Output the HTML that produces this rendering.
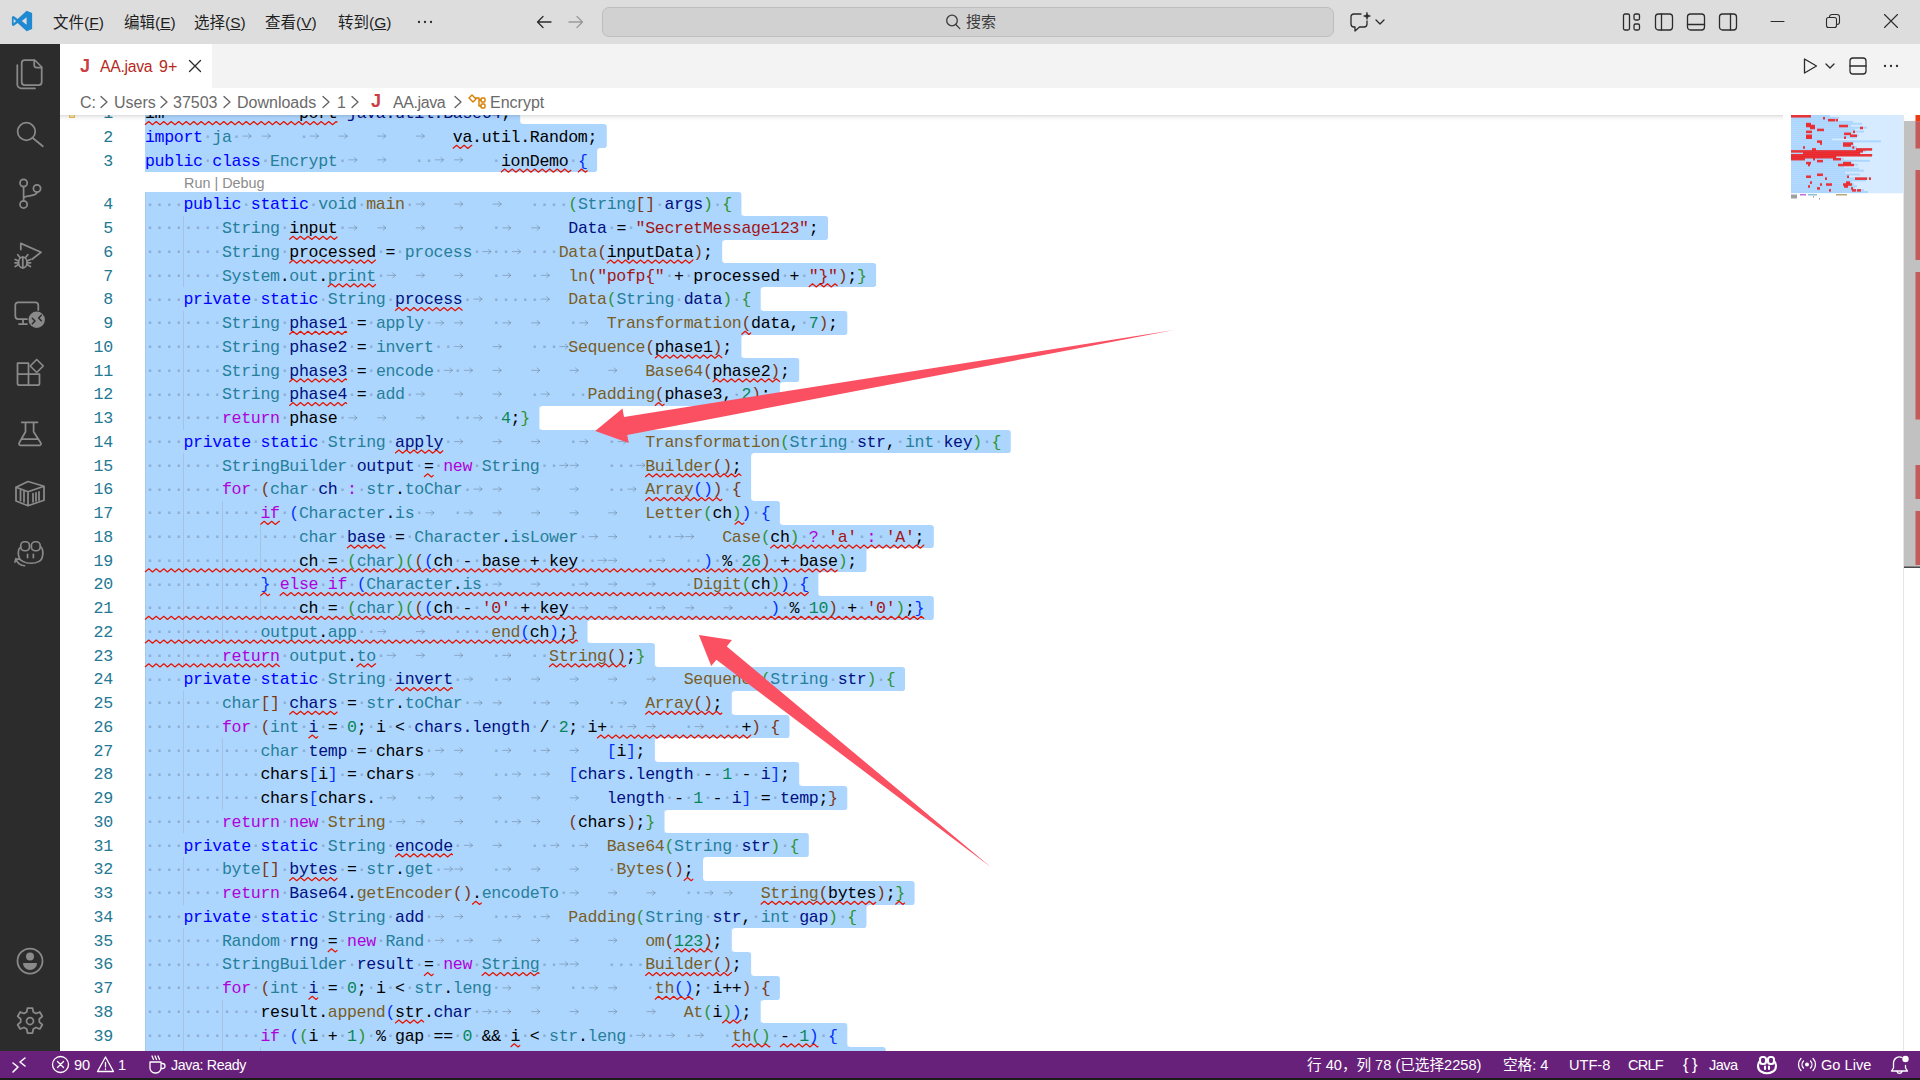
<!DOCTYPE html>
<html lang="zh-CN"><head><meta charset="utf-8"><title>AA.java - Visual Studio Code</title>
<style>
*{box-sizing:border-box;margin:0;padding:0}
html,body{width:1920px;height:1080px;overflow:hidden;background:#fff}
body{position:relative;font-family:"Liberation Sans","Noto Sans CJK SC",sans-serif;color:#333}
.abs{position:absolute}
#title{left:0;top:0;width:1920px;height:44px;background:#dddddd}
#title .m{position:absolute;top:12px;font-size:15.5px;line-height:22px;color:#1f1f1f;white-space:nowrap}
#search{left:602px;top:7px;width:732px;height:30px;background:#d1d1d1;border:1px solid #bdbdbd;border-radius:7px}
#search span{position:absolute;left:363px;top:3px;font-size:15px;line-height:22px;color:#3b3b3b}
#act{left:0;top:44px;width:60px;height:1007px;background:#2c2c2c}
#act svg{position:absolute;left:12px;width:36px;height:36px;fill:none;stroke:#8a8a8a;stroke-width:1.75;stroke-linecap:round;stroke-linejoin:round}
#tabs{left:60px;top:44px;width:1860px;height:44px;background:#f3f3f3}
#tab{left:0;top:0;width:152px;height:44px;background:#fff}
#tab span{position:absolute;white-space:nowrap}
#crumb{left:60px;top:88px;width:1860px;height:27px;background:#fff;font-size:16px;color:#6a6a6a;z-index:5}
#crumb span{position:absolute;top:4px;line-height:22px;white-space:nowrap}
#crumb svg{position:absolute}
#ed{left:60px;top:115px;width:1843px;height:936px;background:#fff;overflow:hidden}
#ed .under{position:absolute;left:0;top:0}
.ln{position:absolute;left:85px;height:23.75px;width:1500px;font:16.6px/23.75px "Liberation Mono",monospace;letter-spacing:-0.34px;white-space:pre}
.ln span,.ln i{position:absolute;top:1.2px;font-style:normal;font-weight:normal}
.ln i{color:rgba(60,75,95,.30);top:0.4px;font-weight:bold}
.num{position:absolute;left:0;width:52.8px;text-align:right;height:23.75px;padding-top:1.2px;font:16.6px/23.75px "Liberation Mono",monospace;letter-spacing:-0.34px;color:#237893}
#lens{left:184px;top:172.5px;font-size:14.4px;line-height:20px;color:#8c8c8c;white-space:nowrap}
#mini{left:1791px;top:115px;width:112px;height:78px;background:#d6ebff;overflow:hidden}
#sb{left:1903px;top:115px;width:17px;height:936px;background:#fff;border-left:1px solid #e4e4e4}
#status{left:0;top:1051px;width:1920px;height:27px;background:#68217a;color:#fff;font-size:14.6px}
#status span{position:absolute;top:3px;line-height:22px;white-space:nowrap}
#status svg{position:absolute;fill:none;stroke:#fff;stroke-width:1.3;stroke-linecap:round;stroke-linejoin:round}
#bot{left:0;top:1078px;width:1920px;height:2px;background:#1b1b1b}
#arrows{left:0;top:0;z-index:9;pointer-events:none}
.ti{position:absolute;fill:none;stroke:#2b2b2b;stroke-width:1.3;stroke-linecap:round;stroke-linejoin:round}
</style></head><body>

<div id="title" class="abs">
 <svg class="abs" style="left:11px;top:10px" width="22" height="22" viewBox="0 0 100 100"><path d="M71 3 30 41 12 27 4 31v38l8 4 18-14 41 38 25-11V14zM12 60V40l11 10zm37-10 22-17v34z" fill="#1f8ad2"/></svg>
 <span class="m" style="left:53px">文件(<u>F</u>)</span>
 <span class="m" style="left:124px">编辑(<u>E</u>)</span>
 <span class="m" style="left:194px">选择(<u>S</u>)</span>
 <span class="m" style="left:265px">查看(<u>V</u>)</span>
 <span class="m" style="left:338px">转到(<u>G</u>)</span>
 <svg class="abs" style="left:417px;top:20px" width="16" height="4" viewBox="0 0 16 4"><circle cx="2" cy="2" r="1.150" fill="#2b2b2b"/><circle cx="8" cy="2" r="1.150" fill="#2b2b2b"/><circle cx="14" cy="2" r="1.150" fill="#2b2b2b"/></svg>
 <svg class="ti" style="left:535px;top:13px" width="18" height="18" viewBox="0 0 18 18"><path d="M16 9H2.5M8 3.5 2.5 9 8 14.5"/></svg>
 <svg class="ti" style="left:567px;top:13px;stroke:#9a9a9a" width="18" height="18" viewBox="0 0 18 18"><path d="M2 9h13.5M10 3.5 15.5 9 10 14.5"/></svg>
 <div id="search" class="abs"><svg class="ti" style="left:341px;top:5px;stroke:#3b3b3b" width="18" height="18" viewBox="0 0 18 18"><circle cx="8" cy="7.500" r="5.300"/><path d="M11.800 11.500 15.800 15.600"/></svg><span>搜索</span></div>
 <svg class="ti" style="left:1348px;top:10px" width="24" height="24" viewBox="0 0 24 24"><path d="M13 4H6a3 3 0 0 0-3 3v7a3 3 0 0 0 3 3h1v4l4.5-4H16a3 3 0 0 0 3-3v-3"/><path d="M19 2.5l.9 2.6 2.6.9-2.6.9L19 9.500l-.9-2.600-2.600-.9 2.600-.9z" fill="#2b2b2b" stroke-width=".6"/></svg>
 <svg class="ti" style="left:1374px;top:16px" width="12" height="12" viewBox="0 0 12 12"><path d="M2 4l4 4 4-4"/></svg>
 <svg class="ti" style="left:1621px;top:11px" width="22" height="22" viewBox="0 0 22 22"><rect x="2.500" y="3" width="6" height="16" rx="1.5"/><rect x="13" y="3" width="5.500" height="6" rx="1.500"/><rect x="13" y="13" width="5.500" height="6" rx="1.500"/></svg>
 <svg class="ti" style="left:1653px;top:11px" width="22" height="22" viewBox="0 0 22 22"><rect x="2.500" y="3" width="17" height="16" rx="3"/><path d="M8.500 3v16"/></svg>
 <svg class="ti" style="left:1685px;top:11px" width="22" height="22" viewBox="0 0 22 22"><rect x="2.500" y="3" width="17" height="16" rx="3"/><path d="M2.500 13.500h17"/></svg>
 <svg class="ti" style="left:1717px;top:11px" width="22" height="22" viewBox="0 0 22 22"><rect x="2.500" y="3" width="17" height="16" rx="3"/><path d="M13.500 3v16"/></svg>
 <svg class="ti" style="left:1770px;top:14px;stroke-width:1.1" width="16" height="16" viewBox="0 0 16 16"><path d="M1 7.500h13"/></svg>
 <svg class="ti" style="left:1825px;top:13px;stroke-width:1.1" width="16" height="16" viewBox="0 0 16 16"><rect x="1.500" y="4.500" width="10" height="10" rx="2"/><path d="M4.500 4.300V4a2.500 2.500 0 0 1 2.500-2.500h5A2.500 2.500 0 0 1 14.500 4v5a2.500 2.500 0 0 1-2.500 2.500"/></svg>
 <svg class="ti" style="left:1883px;top:13px;stroke-width:1.1" width="16" height="16" viewBox="0 0 16 16"><path d="M1.500 1.500l13 13M14.500 1.500l-13 13"/></svg>
</div>

<div id="act" class="abs">
 <svg style="top:11px" viewBox="0 0 36 36"><path d="M12.700 5h10l7 7v15a3 3 0 0 1-3 3h-14a3 3 0 0 1-3-3V8a3 3 0 0 1 3-3z"/><path d="M22.200 5.300v4.700a2.500 2.500 0 0 0 2.500 2.500h4.700"/><path d="M5.300 10v19.400a4 4 0 0 0 4 4H23"/></svg>
 <svg style="top:71px" viewBox="0 0 36 36"><circle cx="14.400" cy="16.500" r="8.800"/><path d="M20.800 23l10 8.200"/></svg>
 <svg style="top:131px" viewBox="0 0 36 36"><circle cx="11.600" cy="8" r="3.600"/><circle cx="11.600" cy="29.400" r="3.600"/><circle cx="25" cy="13.500" r="3.600"/><path d="M11.600 11.600v14.200M25 17.100c0 5.500-13.400 2-13.400 6.500"/></svg>
 <svg style="top:192px" viewBox="0 0 36 36"><path d="M8.800 13.500V7.400L29 16.300l-9 7"/><ellipse cx="10.800" cy="26.500" rx="4.300" ry="5.300"/><path d="M10.800 21.200v10.600M6.500 25l-3.300-1.500M6.500 28.500l-3.300 2M15.100 25l3.300-1.500M15.100 28.500l3.300 2M3 26.800h3.500M15.100 26.800h3.500M8 21.500l-2.200-2.700M13.600 21.500l2.200-2.700"/></svg>
 <svg style="top:252px" viewBox="0 0 36 36"><path d="M26.300 14V9.300a3 3 0 0 0-3-3h-17a3 3 0 0 0-3 3v10.700a3 3 0 0 0 3 3H15M7 28h8M11 23.500V28"/><circle cx="24.700" cy="23.800" r="8.200" fill="#8a8a8a" stroke="none"/><path d="M20.300 22.300l2.700 2.700-2.700 2.700M29.300 19.300l-2.700 2.700 2.700 2.700" stroke="#2c2c2c" stroke-width="1.500"/></svg>
 <svg style="top:312px" viewBox="0 0 36 36"><g transform="translate(-.5,-1.800)"><path d="M6 9h11v22H8a2 2 0 0 1-2-2zM17 20h11v9a2 2 0 0 1-2 2h-9M6 20h11"/><path d="M25.200 5.300l6.500 6.500-6.500 6.500-6.500-6.500z" fill="#2c2c2c"/></g></svg>
 <svg style="top:372px" viewBox="0 0 36 36"><path d="M9.700 6.300h15.800M13.500 6.300v9.500L7.200 27a1.600 1.600 0 0 0 1.400 2.400h18.800a1.600 1.600 0 0 0 1.400-2.400L21.600 15.800V6.300M9.500 23h17"/></svg>
 <svg style="top:432px" viewBox="0 0 36 36"><g transform="scale(1,.93)"><path d="M4 12l12-6 16 5v15l-16 6-12-5zM4 12l12 5 16-6M16 17v15M8.500 15v11.500M12 16.500v11.500M21 19v9M24 18v9M27 17v9"/></g></svg>
 <svg style="top:490px" viewBox="0 0 36 36"><g transform="translate(1,3.400) scale(.97,.885)"><rect x="8" y="5" width="9" height="10" rx="4"/><rect x="19" y="5" width="9" height="10" rx="4"/><path d="M8 11c-4 3-3 14 2 16 5 3 12 3 17 0 4-2 5-12 2-16M15 19v4M21 19v4M3 24c1 5 5 8 9 8M3 24l-1 4M3 24l4 1"/></g></svg>
 <svg style="top:899px" viewBox="0 0 36 36"><circle cx="18" cy="18" r="12.500"/><circle cx="18" cy="13.500" r="4" fill="#8a8a8a" stroke="none"/><path d="M11 20h14a7 7 0 0 1-14 0z" fill="#8a8a8a" stroke="none"/></svg>
 <svg style="top:959px" viewBox="0 0 36 36"><circle cx="18" cy="18" r="3.500"/><path d="M15.500 5h5l.8 4 2.700 1.500 3.800-1.500 2.500 4.300-3 2.700v3l3 2.700-2.500 4.300-3.800-1.500-2.700 1.500-.8 4h-5l-.8-4-2.700-1.500-3.800 1.500-2.500-4.300 3-2.700v-3l-3-2.700 2.500-4.300 3.800 1.500 2.700-1.500z"/></svg>
</div>

<div id="tabs" class="abs">
 <div id="tab" class="abs">
  <span style="left:20px;top:10px;font-size:18px;font-weight:bold;color:#cc3e44;line-height:24px">J</span>
  <span style="left:40px;top:12px;font-size:15.8px;letter-spacing:-.3px;color:#b52a1d;line-height:22px">AA.java</span>
  <span style="left:99px;top:12px;font-size:16px;color:#b52a1d;line-height:22px">9+</span>
  <svg class="ti" style="left:127px;top:14px" width="16" height="16" viewBox="0 0 16 16"><path d="M2.500 2.500l11 11M13.500 2.500l-11 11"/></svg>
 </div>
 <svg class="ti" style="left:1739px;top:11px" width="22" height="22" viewBox="0 0 22 22"><path d="M5.500 4v14l12-7z"/></svg>
 <svg class="ti" style="left:1764px;top:16px" width="12" height="12" viewBox="0 0 12 12"><path d="M2 4l4 4 4-4"/></svg>
 <svg class="ti" style="left:1787px;top:11px" width="22" height="22" viewBox="0 0 22 22"><rect x="3" y="3" width="16" height="16" rx="3"/><path d="M3 11h16"/></svg>
 <svg class="abs" style="left:1823px;top:20px" width="16" height="4" viewBox="0 0 16 4"><circle cx="2" cy="2" r="1.150" fill="#2b2b2b"/><circle cx="8" cy="2" r="1.150" fill="#2b2b2b"/><circle cx="14" cy="2" r="1.150" fill="#2b2b2b"/></svg>
</div>

<div id="crumb" class="abs">
 <span style="left:20px">C:</span><span style="left:54px">Users</span><span style="left:113px">37503</span><span style="left:177px">Downloads</span><span style="left:277px">1</span>
 <span style="left:311px;top:2px;font-size:18px;font-weight:bold;color:#cc3e44">J</span><span style="left:333px;letter-spacing:-.4px">AA.java</span><span style="left:430px">Encrypt</span>
 <svg class="ti" style="left:39px;top:7px;stroke:#616161" width="10" height="14" viewBox="0 0 10 14"><path d="M2 1.500 8 7l-6 5.500"/></svg>
 <svg class="ti" style="left:99px;top:7px;stroke:#616161" width="10" height="14" viewBox="0 0 10 14"><path d="M2 1.500 8 7l-6 5.500"/></svg>
 <svg class="ti" style="left:162px;top:7px;stroke:#616161" width="10" height="14" viewBox="0 0 10 14"><path d="M2 1.500 8 7l-6 5.500"/></svg>
 <svg class="ti" style="left:261px;top:7px;stroke:#616161" width="10" height="14" viewBox="0 0 10 14"><path d="M2 1.500 8 7l-6 5.500"/></svg>
 <svg class="ti" style="left:290px;top:7px;stroke:#616161" width="10" height="14" viewBox="0 0 10 14"><path d="M2 1.500 8 7l-6 5.500"/></svg>
 <svg class="ti" style="left:393px;top:7px;stroke:#616161" width="10" height="14" viewBox="0 0 10 14"><path d="M2 1.500 8 7l-6 5.500"/></svg>
 <svg class="ti" style="left:407px;top:4px;stroke:#d67e00;stroke-width:1.400" width="20" height="20" viewBox="0 0 20 20"><path d="M2 6l3-3 4 4-3 3zM8 6h4M12 6v8h2M12 8h2"/><rect x="14" y="6" width="4" height="4" rx="1"/><rect x="14" y="12" width="4" height="4" rx="1"/></svg>
</div>

<div id="ed" class="abs">
<svg class="under" width="1843" height="936" viewBox="60 115 1843 936"><rect x="145" y="100" width="375.2" height="24" fill="#add6ff"/><rect x="145" y="124" width="461.8" height="24" fill="#add6ff"/><rect x="145" y="148" width="452.1" height="24" fill="#add6ff"/><rect x="145" y="192" width="596.4" height="24" fill="#add6ff"/><rect x="145" y="216" width="683.0" height="24" fill="#add6ff"/><rect x="145" y="240" width="577.2" height="23" fill="#add6ff"/><rect x="145" y="263" width="731.1" height="24" fill="#add6ff"/><rect x="145" y="287" width="615.7" height="24" fill="#add6ff"/><rect x="145" y="311" width="702.3" height="24" fill="#add6ff"/><rect x="145" y="335" width="596.4" height="23" fill="#add6ff"/><rect x="145" y="358" width="654.2" height="24" fill="#add6ff"/><rect x="145" y="382" width="634.9" height="24" fill="#add6ff"/><rect x="145" y="406" width="394.4" height="24" fill="#add6ff"/><rect x="145" y="430" width="865.8" height="23" fill="#add6ff"/><rect x="145" y="453" width="606.1" height="24" fill="#add6ff"/><rect x="145" y="477" width="606.1" height="24" fill="#add6ff"/><rect x="145" y="501" width="634.9" height="24" fill="#add6ff"/><rect x="145" y="525" width="788.8" height="23" fill="#add6ff"/><rect x="145" y="548" width="721.5" height="24" fill="#add6ff"/><rect x="145" y="572" width="673.4" height="24" fill="#add6ff"/><rect x="145" y="596" width="788.8" height="24" fill="#add6ff"/><rect x="145" y="620" width="442.5" height="23" fill="#add6ff"/><rect x="145" y="643" width="509.9" height="24" fill="#add6ff"/><rect x="145" y="667" width="760.0" height="24" fill="#add6ff"/><rect x="145" y="691" width="586.8" height="24" fill="#add6ff"/><rect x="145" y="715" width="644.5" height="23" fill="#add6ff"/><rect x="145" y="738" width="509.9" height="24" fill="#add6ff"/><rect x="145" y="762" width="654.2" height="24" fill="#add6ff"/><rect x="145" y="786" width="702.3" height="24" fill="#add6ff"/><rect x="145" y="810" width="519.5" height="23" fill="#add6ff"/><rect x="145" y="833" width="663.8" height="24" fill="#add6ff"/><rect x="145" y="857" width="558.0" height="24" fill="#add6ff"/><rect x="145" y="881" width="769.6" height="24" fill="#add6ff"/><rect x="145" y="905" width="721.5" height="23" fill="#add6ff"/><rect x="145" y="928" width="586.8" height="24" fill="#add6ff"/><rect x="145" y="952" width="606.1" height="24" fill="#add6ff"/><rect x="145" y="976" width="634.9" height="24" fill="#add6ff"/><rect x="145" y="1000" width="615.7" height="23" fill="#add6ff"/><rect x="145" y="1023" width="702.3" height="24" fill="#add6ff"/><rect x="145" y="1047" width="740.7" height="24" fill="#add6ff"/><path d="M516.7 100.00H520.7V103.50A3.5 3.5 0 0 0 516.7 100.00Z" fill="#fff"/><path d="M520.2 124.00H523.7A3.5 3.5 0 0 1 520.2 120.50Z" fill="#add6ff"/><path d="M603.3 124.00H607.3V127.50A3.5 3.5 0 0 0 603.3 124.00Z" fill="#fff"/><path d="M603.3 148.00H607.3V144.50A3.5 3.5 0 0 1 603.3 148.00Z" fill="#fff"/><path d="M593.6 172.00H597.6V168.50A3.5 3.5 0 0 1 593.6 172.00Z" fill="#fff"/><path d="M597.1 148.00H600.6A3.5 3.5 0 0 0 597.1 151.50Z" fill="#add6ff"/><path d="M737.9 192.00H741.9V195.50A3.5 3.5 0 0 0 737.9 192.00Z" fill="#fff"/><path d="M741.4 216.00H744.9A3.5 3.5 0 0 1 741.4 212.50Z" fill="#add6ff"/><path d="M824.5 216.00H828.5V219.50A3.5 3.5 0 0 0 824.5 216.00Z" fill="#fff"/><path d="M824.5 240.00H828.5V236.50A3.5 3.5 0 0 1 824.5 240.00Z" fill="#fff"/><path d="M722.2 240.00H725.7A3.5 3.5 0 0 0 722.2 243.50Z" fill="#add6ff"/><path d="M722.2 263.00H725.7A3.5 3.5 0 0 1 722.2 259.50Z" fill="#add6ff"/><path d="M872.6 263.00H876.6V266.50A3.5 3.5 0 0 0 872.6 263.00Z" fill="#fff"/><path d="M872.6 287.00H876.6V283.50A3.5 3.5 0 0 1 872.6 287.00Z" fill="#fff"/><path d="M760.7 287.00H764.2A3.5 3.5 0 0 0 760.7 290.50Z" fill="#add6ff"/><path d="M760.7 311.00H764.2A3.5 3.5 0 0 1 760.7 307.50Z" fill="#add6ff"/><path d="M843.8 311.00H847.8V314.50A3.5 3.5 0 0 0 843.8 311.00Z" fill="#fff"/><path d="M843.8 335.00H847.8V331.50A3.5 3.5 0 0 1 843.8 335.00Z" fill="#fff"/><path d="M741.4 335.00H744.9A3.5 3.5 0 0 0 741.4 338.50Z" fill="#add6ff"/><path d="M741.4 358.00H744.9A3.5 3.5 0 0 1 741.4 354.50Z" fill="#add6ff"/><path d="M795.7 358.00H799.7V361.50A3.5 3.5 0 0 0 795.7 358.00Z" fill="#fff"/><path d="M795.7 382.00H799.7V378.50A3.5 3.5 0 0 1 795.7 382.00Z" fill="#fff"/><path d="M776.4 406.00H780.4V402.50A3.5 3.5 0 0 1 776.4 406.00Z" fill="#fff"/><path d="M779.9 382.00H783.4A3.5 3.5 0 0 0 779.9 385.50Z" fill="#add6ff"/><path d="M539.4 406.00H542.9A3.5 3.5 0 0 0 539.4 409.50Z" fill="#add6ff"/><path d="M539.4 430.00H542.9A3.5 3.5 0 0 1 539.4 426.50Z" fill="#add6ff"/><path d="M1007.3 430.00H1011.3V433.50A3.5 3.5 0 0 0 1007.3 430.00Z" fill="#fff"/><path d="M1007.3 453.00H1011.3V449.50A3.5 3.5 0 0 1 1007.3 453.00Z" fill="#fff"/><path d="M751.1 453.00H754.6A3.5 3.5 0 0 0 751.1 456.50Z" fill="#add6ff"/><path d="M751.1 501.00H754.6A3.5 3.5 0 0 1 751.1 497.50Z" fill="#add6ff"/><path d="M776.4 501.00H780.4V504.50A3.5 3.5 0 0 0 776.4 501.00Z" fill="#fff"/><path d="M779.9 525.00H783.4A3.5 3.5 0 0 1 779.9 521.50Z" fill="#add6ff"/><path d="M930.3 525.00H934.3V528.50A3.5 3.5 0 0 0 930.3 525.00Z" fill="#fff"/><path d="M930.3 548.00H934.3V544.50A3.5 3.5 0 0 1 930.3 548.00Z" fill="#fff"/><path d="M863.0 572.00H867.0V568.50A3.5 3.5 0 0 1 863.0 572.00Z" fill="#fff"/><path d="M866.5 548.00H870.0A3.5 3.5 0 0 0 866.5 551.50Z" fill="#add6ff"/><path d="M818.4 572.00H821.9A3.5 3.5 0 0 0 818.4 575.50Z" fill="#add6ff"/><path d="M818.4 596.00H821.9A3.5 3.5 0 0 1 818.4 592.50Z" fill="#add6ff"/><path d="M930.3 596.00H934.3V599.50A3.5 3.5 0 0 0 930.3 596.00Z" fill="#fff"/><path d="M930.3 620.00H934.3V616.50A3.5 3.5 0 0 1 930.3 620.00Z" fill="#fff"/><path d="M587.5 620.00H591.0A3.5 3.5 0 0 0 587.5 623.50Z" fill="#add6ff"/><path d="M587.5 643.00H591.0A3.5 3.5 0 0 1 587.5 639.50Z" fill="#add6ff"/><path d="M651.4 643.00H655.4V646.50A3.5 3.5 0 0 0 651.4 643.00Z" fill="#fff"/><path d="M654.9 667.00H658.4A3.5 3.5 0 0 1 654.9 663.50Z" fill="#add6ff"/><path d="M901.5 667.00H905.5V670.50A3.5 3.5 0 0 0 901.5 667.00Z" fill="#fff"/><path d="M901.5 691.00H905.5V687.50A3.5 3.5 0 0 1 901.5 691.00Z" fill="#fff"/><path d="M731.8 691.00H735.3A3.5 3.5 0 0 0 731.8 694.50Z" fill="#add6ff"/><path d="M731.8 715.00H735.3A3.5 3.5 0 0 1 731.8 711.50Z" fill="#add6ff"/><path d="M786.0 715.00H790.0V718.50A3.5 3.5 0 0 0 786.0 715.00Z" fill="#fff"/><path d="M786.0 738.00H790.0V734.50A3.5 3.5 0 0 1 786.0 738.00Z" fill="#fff"/><path d="M654.9 738.00H658.4A3.5 3.5 0 0 0 654.9 741.50Z" fill="#add6ff"/><path d="M654.9 762.00H658.4A3.5 3.5 0 0 1 654.9 758.50Z" fill="#add6ff"/><path d="M795.7 762.00H799.7V765.50A3.5 3.5 0 0 0 795.7 762.00Z" fill="#fff"/><path d="M799.2 786.00H802.7A3.5 3.5 0 0 1 799.2 782.50Z" fill="#add6ff"/><path d="M843.8 786.00H847.8V789.50A3.5 3.5 0 0 0 843.8 786.00Z" fill="#fff"/><path d="M843.8 810.00H847.8V806.50A3.5 3.5 0 0 1 843.8 810.00Z" fill="#fff"/><path d="M664.5 810.00H668.0A3.5 3.5 0 0 0 664.5 813.50Z" fill="#add6ff"/><path d="M664.5 833.00H668.0A3.5 3.5 0 0 1 664.5 829.50Z" fill="#add6ff"/><path d="M805.3 833.00H809.3V836.50A3.5 3.5 0 0 0 805.3 833.00Z" fill="#fff"/><path d="M805.3 857.00H809.3V853.50A3.5 3.5 0 0 1 805.3 857.00Z" fill="#fff"/><path d="M703.0 857.00H706.5A3.5 3.5 0 0 0 703.0 860.50Z" fill="#add6ff"/><path d="M703.0 881.00H706.5A3.5 3.5 0 0 1 703.0 877.50Z" fill="#add6ff"/><path d="M911.1 881.00H915.1V884.50A3.5 3.5 0 0 0 911.1 881.00Z" fill="#fff"/><path d="M911.1 905.00H915.1V901.50A3.5 3.5 0 0 1 911.1 905.00Z" fill="#fff"/><path d="M863.0 928.00H867.0V924.50A3.5 3.5 0 0 1 863.0 928.00Z" fill="#fff"/><path d="M866.5 905.00H870.0A3.5 3.5 0 0 0 866.5 908.50Z" fill="#add6ff"/><path d="M731.8 928.00H735.3A3.5 3.5 0 0 0 731.8 931.50Z" fill="#add6ff"/><path d="M731.8 952.00H735.3A3.5 3.5 0 0 1 731.8 948.50Z" fill="#add6ff"/><path d="M747.6 952.00H751.6V955.50A3.5 3.5 0 0 0 747.6 952.00Z" fill="#fff"/><path d="M751.1 976.00H754.6A3.5 3.5 0 0 1 751.1 972.50Z" fill="#add6ff"/><path d="M776.4 976.00H780.4V979.50A3.5 3.5 0 0 0 776.4 976.00Z" fill="#fff"/><path d="M776.4 1000.00H780.4V996.50A3.5 3.5 0 0 1 776.4 1000.00Z" fill="#fff"/><path d="M760.7 1000.00H764.2A3.5 3.5 0 0 0 760.7 1003.50Z" fill="#add6ff"/><path d="M760.7 1023.00H764.2A3.5 3.5 0 0 1 760.7 1019.50Z" fill="#add6ff"/><path d="M843.8 1023.00H847.8V1026.50A3.5 3.5 0 0 0 843.8 1023.00Z" fill="#fff"/><path d="M847.3 1047.00H850.8A3.5 3.5 0 0 1 847.3 1043.50Z" fill="#add6ff"/><path d="M882.2 1047.00H886.2V1050.50A3.5 3.5 0 0 0 882.2 1047.00Z" fill="#fff"/><path d="M882.2 1071.00H886.2V1067.50A3.5 3.5 0 0 1 882.2 1071.00Z" fill="#fff"/><rect x="145" y="192" width="1" height="24" fill="#9fb4c9" opacity="0.35"/><rect x="145" y="216" width="1" height="24" fill="#9fb4c9" opacity="0.35"/><rect x="183" y="216" width="1" height="24" fill="#9fb4c9" opacity="0.55"/><rect x="145" y="240" width="1" height="23" fill="#9fb4c9" opacity="0.35"/><rect x="183" y="240" width="1" height="23" fill="#9fb4c9" opacity="0.55"/><rect x="145" y="263" width="1" height="24" fill="#9fb4c9" opacity="0.35"/><rect x="183" y="263" width="1" height="24" fill="#9fb4c9" opacity="0.55"/><rect x="145" y="287" width="1" height="24" fill="#9fb4c9" opacity="0.35"/><rect x="145" y="311" width="1" height="24" fill="#9fb4c9" opacity="0.35"/><rect x="183" y="311" width="1" height="24" fill="#9fb4c9" opacity="0.55"/><rect x="145" y="335" width="1" height="23" fill="#9fb4c9" opacity="0.35"/><rect x="183" y="335" width="1" height="23" fill="#9fb4c9" opacity="0.55"/><rect x="145" y="358" width="1" height="24" fill="#9fb4c9" opacity="0.35"/><rect x="183" y="358" width="1" height="24" fill="#9fb4c9" opacity="0.55"/><rect x="145" y="382" width="1" height="24" fill="#9fb4c9" opacity="0.35"/><rect x="183" y="382" width="1" height="24" fill="#9fb4c9" opacity="0.55"/><rect x="145" y="406" width="1" height="24" fill="#9fb4c9" opacity="0.35"/><rect x="183" y="406" width="1" height="24" fill="#9fb4c9" opacity="0.55"/><rect x="145" y="430" width="1" height="23" fill="#9fb4c9" opacity="0.35"/><rect x="145" y="453" width="1" height="24" fill="#9fb4c9" opacity="0.35"/><rect x="183" y="453" width="1" height="24" fill="#9fb4c9" opacity="0.55"/><rect x="145" y="477" width="1" height="24" fill="#9fb4c9" opacity="0.35"/><rect x="183" y="477" width="1" height="24" fill="#9fb4c9" opacity="0.55"/><rect x="145" y="501" width="1" height="24" fill="#9fb4c9" opacity="0.35"/><rect x="183" y="501" width="1" height="24" fill="#9fb4c9" opacity="0.55"/><rect x="222" y="501" width="1" height="24" fill="#9fb4c9" opacity="0.55"/><rect x="145" y="525" width="1" height="23" fill="#9fb4c9" opacity="0.35"/><rect x="183" y="525" width="1" height="23" fill="#9fb4c9" opacity="0.55"/><rect x="222" y="525" width="1" height="23" fill="#9fb4c9" opacity="0.55"/><rect x="260" y="525" width="1" height="23" fill="#9fb4c9" opacity="0.55"/><rect x="145" y="548" width="1" height="24" fill="#9fb4c9" opacity="0.35"/><rect x="183" y="548" width="1" height="24" fill="#9fb4c9" opacity="0.55"/><rect x="222" y="548" width="1" height="24" fill="#9fb4c9" opacity="0.55"/><rect x="260" y="548" width="1" height="24" fill="#9fb4c9" opacity="0.55"/><rect x="145" y="572" width="1" height="24" fill="#9fb4c9" opacity="0.35"/><rect x="183" y="572" width="1" height="24" fill="#9fb4c9" opacity="0.55"/><rect x="222" y="572" width="1" height="24" fill="#9fb4c9" opacity="0.55"/><rect x="145" y="596" width="1" height="24" fill="#9fb4c9" opacity="0.35"/><rect x="183" y="596" width="1" height="24" fill="#9fb4c9" opacity="0.55"/><rect x="222" y="596" width="1" height="24" fill="#9fb4c9" opacity="0.55"/><rect x="260" y="596" width="1" height="24" fill="#9fb4c9" opacity="0.55"/><rect x="145" y="620" width="1" height="23" fill="#9fb4c9" opacity="0.35"/><rect x="183" y="620" width="1" height="23" fill="#9fb4c9" opacity="0.55"/><rect x="222" y="620" width="1" height="23" fill="#9fb4c9" opacity="0.55"/><rect x="145" y="643" width="1" height="24" fill="#9fb4c9" opacity="0.35"/><rect x="183" y="643" width="1" height="24" fill="#9fb4c9" opacity="0.55"/><rect x="145" y="667" width="1" height="24" fill="#9fb4c9" opacity="0.35"/><rect x="145" y="691" width="1" height="24" fill="#9fb4c9" opacity="0.35"/><rect x="183" y="691" width="1" height="24" fill="#9fb4c9" opacity="0.55"/><rect x="145" y="715" width="1" height="23" fill="#9fb4c9" opacity="0.35"/><rect x="183" y="715" width="1" height="23" fill="#9fb4c9" opacity="0.55"/><rect x="145" y="738" width="1" height="24" fill="#9fb4c9" opacity="0.35"/><rect x="183" y="738" width="1" height="24" fill="#9fb4c9" opacity="0.55"/><rect x="222" y="738" width="1" height="24" fill="#9fb4c9" opacity="0.55"/><rect x="145" y="762" width="1" height="24" fill="#9fb4c9" opacity="0.35"/><rect x="183" y="762" width="1" height="24" fill="#9fb4c9" opacity="0.55"/><rect x="222" y="762" width="1" height="24" fill="#9fb4c9" opacity="0.55"/><rect x="145" y="786" width="1" height="24" fill="#9fb4c9" opacity="0.35"/><rect x="183" y="786" width="1" height="24" fill="#9fb4c9" opacity="0.55"/><rect x="222" y="786" width="1" height="24" fill="#9fb4c9" opacity="0.55"/><rect x="145" y="810" width="1" height="23" fill="#9fb4c9" opacity="0.35"/><rect x="183" y="810" width="1" height="23" fill="#9fb4c9" opacity="0.55"/><rect x="145" y="833" width="1" height="24" fill="#9fb4c9" opacity="0.35"/><rect x="145" y="857" width="1" height="24" fill="#9fb4c9" opacity="0.35"/><rect x="183" y="857" width="1" height="24" fill="#9fb4c9" opacity="0.55"/><rect x="145" y="881" width="1" height="24" fill="#9fb4c9" opacity="0.35"/><rect x="183" y="881" width="1" height="24" fill="#9fb4c9" opacity="0.55"/><rect x="145" y="905" width="1" height="23" fill="#9fb4c9" opacity="0.35"/><rect x="145" y="928" width="1" height="24" fill="#9fb4c9" opacity="0.35"/><rect x="183" y="928" width="1" height="24" fill="#9fb4c9" opacity="0.55"/><rect x="145" y="952" width="1" height="24" fill="#9fb4c9" opacity="0.35"/><rect x="183" y="952" width="1" height="24" fill="#9fb4c9" opacity="0.55"/><rect x="145" y="976" width="1" height="24" fill="#9fb4c9" opacity="0.35"/><rect x="183" y="976" width="1" height="24" fill="#9fb4c9" opacity="0.55"/><rect x="145" y="1000" width="1" height="23" fill="#9fb4c9" opacity="0.35"/><rect x="183" y="1000" width="1" height="23" fill="#9fb4c9" opacity="0.55"/><rect x="222" y="1000" width="1" height="23" fill="#9fb4c9" opacity="0.55"/><rect x="145" y="1023" width="1" height="24" fill="#9fb4c9" opacity="0.35"/><rect x="183" y="1023" width="1" height="24" fill="#9fb4c9" opacity="0.55"/><rect x="222" y="1023" width="1" height="24" fill="#9fb4c9" opacity="0.55"/><rect x="145" y="1047" width="1" height="24" fill="#9fb4c9" opacity="0.35"/><rect x="183" y="1047" width="1" height="24" fill="#9fb4c9" opacity="0.55"/><rect x="222" y="1047" width="1" height="24" fill="#9fb4c9" opacity="0.55"/><rect x="260" y="1047" width="1" height="24" fill="#9fb4c9" opacity="0.55"/><path d="M145.0 124.75L148.8 121.55L152.5 124.75L156.2 121.55L160.0 124.75L163.8 121.55L167.5 124.75L171.2 121.55L175.0 124.75L178.8 121.55L182.5 124.75L186.2 121.55L190.0 124.75L193.8 121.55L197.5 124.75L201.2 121.55L205.0 124.75L208.8 121.55L212.5 124.75L216.2 121.55L220.0 124.75L223.8 121.55L227.5 124.75L231.2 121.55L235.0 124.75L238.8 121.55L242.5 124.75L246.2 121.55L250.0 124.75L253.8 121.55L257.5 124.75L261.2 121.55L265.0 124.75L268.8 121.55L272.5 124.75L276.2 121.55L280.0 124.75L283.8 121.55L287.5 124.75L291.2 121.55L295.0 124.75L298.8 121.55L302.5 124.75L306.2 121.55L310.0 124.75L313.8 121.55L317.5 124.75L321.2 121.55L325.0 124.75L328.8 121.55L332.5 124.75L336.2 121.55L337.4 122.53" fill="none" stroke="#e51400" stroke-width="1.2" stroke-linejoin="round"/><path d="M452.8 148.50L456.6 145.30L460.3 148.50L464.1 145.30L467.8 148.50L471.6 145.30L472.1 145.72" fill="none" stroke="#e51400" stroke-width="1.2" stroke-linejoin="round"/><path d="M500.9 172.25L504.7 169.05L508.4 172.25L512.2 169.05L515.9 172.25L519.7 169.05L523.4 172.25L527.2 169.05L530.9 172.25L534.7 169.05L538.4 172.25L542.2 169.05L545.9 172.25L549.7 169.05L553.4 172.25L557.2 169.05L560.9 172.25L564.7 169.05L568.4 172.25L571.2 169.92" fill="none" stroke="#e51400" stroke-width="1.2" stroke-linejoin="round"/><path d="M577.9 172.25L581.6 169.05L585.4 172.25L587.5 170.44" fill="none" stroke="#e51400" stroke-width="1.2" stroke-linejoin="round"/><path d="M289.3 239.45L293.0 236.25L296.8 239.45L300.5 236.25L304.3 239.45L308.0 236.25L311.8 239.45L315.5 236.25L319.3 239.45L323.0 236.25L326.8 239.45L330.5 236.25L334.3 239.45L337.4 236.80" fill="none" stroke="#e51400" stroke-width="1.2" stroke-linejoin="round"/><path d="M289.3 263.20L293.0 260.00L296.8 263.20L300.5 260.00L304.3 263.20L308.0 260.00L311.8 263.20L315.5 260.00L319.3 263.20L323.0 260.00L326.8 263.20L330.5 260.00L334.3 263.20L338.0 260.00L341.8 263.20L345.5 260.00L349.3 263.20L353.0 260.00L356.8 263.20L360.5 260.00L364.3 263.20L368.0 260.00L371.8 263.20L375.5 260.00L375.9 260.28" fill="none" stroke="#e51400" stroke-width="1.2" stroke-linejoin="round"/><path d="M606.8 263.20L610.5 260.00L614.3 263.20L618.0 260.00L621.8 263.20L625.5 260.00L629.3 263.20L633.0 260.00L636.8 263.20L640.5 260.00L644.3 263.20L648.0 260.00L651.8 263.20L655.5 260.00L659.3 263.20L663.0 260.00L666.8 263.20L670.5 260.00L674.3 263.20L678.0 260.00L681.8 263.20L685.5 260.00L689.3 263.20L693.0 260.00L693.3 260.28" fill="none" stroke="#e51400" stroke-width="1.2" stroke-linejoin="round"/><path d="M327.8 286.95L331.5 283.75L335.3 286.95L339.0 283.75L342.8 286.95L346.5 283.75L350.3 286.95L354.0 283.75L357.8 286.95L361.5 283.75L365.3 286.95L369.0 283.75L372.8 286.95L375.9 284.30" fill="none" stroke="#e51400" stroke-width="1.2" stroke-linejoin="round"/><path d="M808.8 286.95L812.5 283.75L816.3 286.95L820.0 283.75L823.8 286.95L827.5 283.75L831.3 286.95L835.0 283.75L837.6 285.98" fill="none" stroke="#e51400" stroke-width="1.2" stroke-linejoin="round"/><path d="M395.1 310.70L398.9 307.50L402.6 310.70L406.4 307.50L410.1 310.70L413.9 307.50L417.6 310.70L421.4 307.50L425.1 310.70L428.9 307.50L432.6 310.70L436.4 307.50L440.1 310.70L443.9 307.50L447.6 310.70L451.4 307.50L455.1 310.70L458.9 307.50L462.5 310.56" fill="none" stroke="#e51400" stroke-width="1.2" stroke-linejoin="round"/><path d="M289.3 334.45L293.0 331.25L296.8 334.45L300.5 331.25L304.3 334.45L308.0 331.25L311.8 334.45L315.5 331.25L319.3 334.45L323.0 331.25L326.8 334.45L330.5 331.25L334.3 334.45L338.0 331.25L341.8 334.45L345.5 331.25L347.0 332.50" fill="none" stroke="#e51400" stroke-width="1.2" stroke-linejoin="round"/><path d="M741.4 334.45L745.2 331.25L748.9 334.45L751.1 332.64" fill="none" stroke="#e51400" stroke-width="1.2" stroke-linejoin="round"/><path d="M654.9 358.20L658.6 355.00L662.4 358.20L666.1 355.00L669.9 358.20L673.6 355.00L677.4 358.20L681.1 355.00L684.9 358.20L688.6 355.00L692.4 358.20L696.1 355.00L699.9 358.20L703.6 355.00L707.4 358.20L711.1 355.00L714.9 358.20L718.6 355.00L722.2 358.06" fill="none" stroke="#e51400" stroke-width="1.2" stroke-linejoin="round"/><path d="M289.3 381.95L293.0 378.75L296.8 381.95L300.5 378.75L304.3 381.95L308.0 378.75L311.8 381.95L315.5 378.75L319.3 381.95L323.0 378.75L326.8 381.95L330.5 378.75L334.3 381.95L338.0 378.75L341.8 381.95L345.5 378.75L347.0 380.00" fill="none" stroke="#e51400" stroke-width="1.2" stroke-linejoin="round"/><path d="M712.6 381.95L716.3 378.75L720.1 381.95L723.8 378.75L727.6 381.95L731.3 378.75L735.1 381.95L738.8 378.75L742.6 381.95L746.3 378.75L750.1 381.95L753.8 378.75L757.6 381.95L761.3 378.75L765.1 381.95L768.8 378.75L772.6 381.95L776.3 378.75L779.9 381.81" fill="none" stroke="#e51400" stroke-width="1.2" stroke-linejoin="round"/><path d="M289.3 405.70L293.0 402.50L296.8 405.70L300.5 402.50L304.3 405.70L308.0 402.50L311.8 405.70L315.5 402.50L319.3 405.70L323.0 402.50L326.8 405.70L330.5 402.50L334.3 405.70L338.0 402.50L341.8 405.70L345.5 402.50L347.0 403.75" fill="none" stroke="#e51400" stroke-width="1.2" stroke-linejoin="round"/><path d="M654.9 405.70L658.6 402.50L662.4 405.70L664.5 403.89" fill="none" stroke="#e51400" stroke-width="1.2" stroke-linejoin="round"/><path d="M395.1 453.20L398.9 450.00L402.6 453.20L406.4 450.00L410.1 453.20L413.9 450.00L417.6 453.20L421.4 450.00L425.1 453.20L428.9 450.00L432.6 453.20L436.4 450.00L440.1 453.20L443.2 450.55" fill="none" stroke="#e51400" stroke-width="1.2" stroke-linejoin="round"/><path d="M424.0 476.95L427.7 473.75L431.5 476.95L433.6 475.14" fill="none" stroke="#e51400" stroke-width="1.2" stroke-linejoin="round"/><path d="M645.2 476.95L649.0 473.75L652.7 476.95L656.5 473.75L660.2 476.95L664.0 473.75L667.7 476.95L671.5 473.75L675.2 476.95L679.0 473.75L682.7 476.95L686.5 473.75L690.2 476.95L694.0 473.75L697.7 476.95L701.5 473.75L705.2 476.95L709.0 473.75L712.7 476.95L716.5 473.75L720.2 476.95L724.0 473.75L727.7 476.95L731.5 473.75L735.2 476.95L739.0 473.75L741.4 475.84" fill="none" stroke="#e51400" stroke-width="1.2" stroke-linejoin="round"/><path d="M645.2 500.70L649.0 497.50L652.7 500.70L656.5 497.50L660.2 500.70L664.0 497.50L667.7 500.70L671.5 497.50L675.2 500.70L679.0 497.50L682.7 500.70L686.5 497.50L690.2 500.70L694.0 497.50L697.7 500.70L701.5 497.50L705.2 500.70L709.0 497.50L712.7 500.70L716.5 497.50L720.2 500.70L722.2 499.03" fill="none" stroke="#e51400" stroke-width="1.2" stroke-linejoin="round"/><path d="M260.4 524.45L264.2 521.25L267.9 524.45L271.7 521.25L275.4 524.45L279.2 521.25L279.7 521.67" fill="none" stroke="#e51400" stroke-width="1.2" stroke-linejoin="round"/><path d="M734.7 524.45L738.5 521.25L742.2 524.45L744.3 522.64" fill="none" stroke="#e51400" stroke-width="1.2" stroke-linejoin="round"/><path d="M347.0 548.20L350.8 545.00L354.5 548.20L358.3 545.00L362.0 548.20L365.8 545.00L369.5 548.20L373.3 545.00L377.0 548.20L380.8 545.00L384.5 548.20L385.5 547.36" fill="none" stroke="#e51400" stroke-width="1.2" stroke-linejoin="round"/><path d="M770.3 548.20L774.0 545.00L777.8 548.20L781.5 545.00L785.3 548.20L789.0 545.00L792.8 548.20L796.5 545.00L800.3 548.20L804.0 545.00L807.8 548.20L811.5 545.00L815.3 548.20L819.0 545.00L822.8 548.20L826.5 545.00L830.3 548.20L834.0 545.00L837.8 548.20L841.5 545.00L845.3 548.20L849.0 545.00L852.8 548.20L856.5 545.00L860.3 548.20L864.0 545.00L867.8 548.20L871.5 545.00L875.3 548.20L879.0 545.00L882.8 548.20L886.5 545.00L890.3 548.20L894.0 545.00L897.8 548.20L901.5 545.00L905.3 548.20L909.0 545.00L912.8 548.20L916.5 545.00L920.3 548.20L924.0 545.00L924.2 545.15" fill="none" stroke="#e51400" stroke-width="1.2" stroke-linejoin="round"/><path d="M145.0 571.95L148.8 568.75L152.5 571.95L156.2 568.75L160.0 571.95L163.8 568.75L167.5 571.95L171.2 568.75L175.0 571.95L178.8 568.75L182.5 571.95L186.2 568.75L190.0 571.95L193.8 568.75L197.5 571.95L201.2 568.75L205.0 571.95L208.8 568.75L212.5 571.95L216.2 568.75L220.0 571.95L223.8 568.75L227.5 571.95L231.2 568.75L235.0 571.95L238.8 568.75L242.5 571.95L246.2 568.75L250.0 571.95L253.8 568.75L257.5 571.95L261.2 568.75L265.0 571.95L268.8 568.75L272.5 571.95L276.2 568.75L280.0 571.95L283.8 568.75L287.5 571.95L291.2 568.75L295.0 571.95L298.8 568.75L302.5 571.95L306.2 568.75L310.0 571.95L313.8 568.75L317.5 571.95L321.2 568.75L325.0 571.95L328.8 568.75L332.5 571.95L336.2 568.75L340.0 571.95L343.8 568.75L347.5 571.95L351.2 568.75L355.0 571.95L358.8 568.75L362.5 571.95L366.2 568.75L370.0 571.95L373.8 568.75L377.5 571.95L381.2 568.75L385.0 571.95L388.8 568.75L392.5 571.95L396.2 568.75L400.0 571.95L403.8 568.75L407.5 571.95L411.2 568.75L415.0 571.95L418.8 568.75L422.5 571.95L426.2 568.75L430.0 571.95L433.8 568.75L437.5 571.95L441.2 568.75L445.0 571.95L448.8 568.75L452.5 571.95L456.2 568.75L460.0 571.95L463.8 568.75L467.5 571.95L471.2 568.75L475.0 571.95L478.8 568.75L482.5 571.95L486.2 568.75L490.0 571.95L493.8 568.75L497.5 571.95L501.2 568.75L505.0 571.95L508.8 568.75L512.5 571.95L516.2 568.75L520.0 571.95L523.8 568.75L527.5 571.95L531.2 568.75L535.0 571.95L538.8 568.75L542.5 571.95L546.2 568.75L550.0 571.95L553.8 568.75L557.5 571.95L561.2 568.75L565.0 571.95L568.8 568.75L572.5 571.95L576.2 568.75L580.0 571.95L583.8 568.75L587.5 571.95L591.2 568.75L595.0 571.95L598.8 568.75L602.5 571.95L606.2 568.75L610.0 571.95L613.8 568.75L617.5 571.95L621.2 568.75L625.0 571.95L628.8 568.75L632.5 571.95L636.2 568.75L640.0 571.95L643.8 568.75L647.5 571.95L651.2 568.75L655.0 571.95L658.8 568.75L662.5 571.95L666.2 568.75L670.0 571.95L673.8 568.75L677.5 571.95L681.2 568.75L685.0 571.95L688.8 568.75L692.5 571.95L696.2 568.75L700.0 571.95L703.8 568.75L707.5 571.95L711.2 568.75L715.0 571.95L718.8 568.75L722.5 571.95L726.2 568.75L730.0 571.95L733.8 568.75L737.5 571.95L741.2 568.75L745.0 571.95L748.8 568.75L752.5 571.95L756.2 568.75L760.0 571.95L763.8 568.75L767.5 571.95L771.2 568.75L775.0 571.95L778.8 568.75L782.5 571.95L786.2 568.75L790.0 571.95L793.8 568.75L797.5 571.95L801.2 568.75L805.0 571.95L808.8 568.75L812.5 571.95L816.2 568.75L820.0 571.95L823.8 568.75L827.5 571.95L831.2 568.75L835.0 571.95L837.6 569.70" fill="none" stroke="#e51400" stroke-width="1.2" stroke-linejoin="round"/><path d="M260.4 595.70L264.2 592.50L267.9 595.70L270.1 593.89" fill="none" stroke="#e51400" stroke-width="1.2" stroke-linejoin="round"/><path d="M279.7 595.70L283.4 592.50L287.2 595.70L290.9 592.50L294.7 595.70L298.4 592.50L302.2 595.70L305.9 592.50L309.7 595.70L313.4 592.50L317.2 595.70L320.9 592.50L324.7 595.70L328.4 592.50L332.2 595.70L335.9 592.50L339.7 595.70L343.4 592.50L347.2 595.70L350.9 592.50L354.7 595.70L358.4 592.50L362.2 595.70L365.9 592.50L369.7 595.70L373.4 592.50L377.2 595.70L380.9 592.50L384.7 595.70L388.4 592.50L392.2 595.70L395.9 592.50L399.7 595.70L403.4 592.50L407.2 595.70L410.9 592.50L414.7 595.70L418.4 592.50L422.2 595.70L425.9 592.50L429.7 595.70L433.4 592.50L437.2 595.70L440.9 592.50L444.7 595.70L448.4 592.50L452.2 595.70L455.9 592.50L459.7 595.70L463.4 592.50L467.2 595.70L470.9 592.50L474.7 595.70L478.4 592.50L482.2 595.70L485.9 592.50L489.7 595.70L493.4 592.50L497.2 595.70L500.9 592.50L504.7 595.70L508.4 592.50L512.2 595.70L515.9 592.50L519.7 595.70L523.4 592.50L527.2 595.70L530.9 592.50L534.7 595.70L538.4 592.50L542.2 595.70L545.9 592.50L549.7 595.70L553.4 592.50L557.2 595.70L560.9 592.50L564.7 595.70L568.4 592.50L572.2 595.70L575.9 592.50L579.7 595.70L583.4 592.50L587.2 595.70L590.9 592.50L594.7 595.70L598.4 592.50L602.2 595.70L605.9 592.50L609.7 595.70L613.4 592.50L617.2 595.70L620.9 592.50L624.7 595.70L628.4 592.50L632.2 595.70L635.9 592.50L639.7 595.70L643.4 592.50L647.2 595.70L650.9 592.50L654.7 595.70L658.4 592.50L662.2 595.70L665.9 592.50L669.7 595.70L673.4 592.50L677.2 595.70L680.9 592.50L684.7 595.70L688.4 592.50L692.2 595.70L695.9 592.50L699.7 595.70L703.4 592.50L707.2 595.70L710.9 592.50L714.7 595.70L718.4 592.50L722.2 595.70L725.9 592.50L729.7 595.70L733.4 592.50L737.2 595.70L740.9 592.50L744.7 595.70L748.4 592.50L752.2 595.70L755.9 592.50L759.7 595.70L763.4 592.50L767.2 595.70L770.9 592.50L774.7 595.70L778.4 592.50L782.2 595.70L785.9 592.50L789.7 595.70L793.4 592.50L797.2 595.70L800.9 592.50L804.7 595.70L808.4 592.50L808.8 592.80" fill="none" stroke="#e51400" stroke-width="1.2" stroke-linejoin="round"/><path d="M145.0 619.45L148.8 616.25L152.5 619.45L156.2 616.25L160.0 619.45L163.8 616.25L167.5 619.45L171.2 616.25L175.0 619.45L178.8 616.25L182.5 619.45L186.2 616.25L190.0 619.45L193.8 616.25L197.5 619.45L201.2 616.25L205.0 619.45L208.8 616.25L212.5 619.45L216.2 616.25L220.0 619.45L223.8 616.25L227.5 619.45L231.2 616.25L235.0 619.45L238.8 616.25L242.5 619.45L246.2 616.25L250.0 619.45L253.8 616.25L257.5 619.45L261.2 616.25L265.0 619.45L268.8 616.25L272.5 619.45L276.2 616.25L280.0 619.45L283.8 616.25L287.5 619.45L291.2 616.25L295.0 619.45L298.8 616.25L302.5 619.45L306.2 616.25L310.0 619.45L313.8 616.25L317.5 619.45L321.2 616.25L325.0 619.45L328.8 616.25L332.5 619.45L336.2 616.25L340.0 619.45L343.8 616.25L347.5 619.45L351.2 616.25L355.0 619.45L358.8 616.25L362.5 619.45L366.2 616.25L370.0 619.45L373.8 616.25L377.5 619.45L381.2 616.25L385.0 619.45L388.8 616.25L392.5 619.45L396.2 616.25L400.0 619.45L403.8 616.25L407.5 619.45L411.2 616.25L415.0 619.45L418.8 616.25L422.5 619.45L426.2 616.25L430.0 619.45L433.8 616.25L437.5 619.45L441.2 616.25L445.0 619.45L448.8 616.25L452.5 619.45L456.2 616.25L460.0 619.45L463.8 616.25L467.5 619.45L471.2 616.25L475.0 619.45L478.8 616.25L482.5 619.45L486.2 616.25L490.0 619.45L493.8 616.25L497.5 619.45L501.2 616.25L505.0 619.45L508.8 616.25L512.5 619.45L516.2 616.25L520.0 619.45L523.8 616.25L527.5 619.45L531.2 616.25L535.0 619.45L538.8 616.25L542.5 619.45L546.2 616.25L550.0 619.45L553.8 616.25L557.5 619.45L561.2 616.25L565.0 619.45L568.8 616.25L572.5 619.45L576.2 616.25L580.0 619.45L583.8 616.25L587.5 619.45L591.2 616.25L595.0 619.45L598.8 616.25L602.5 619.45L606.2 616.25L610.0 619.45L613.8 616.25L617.5 619.45L621.2 616.25L625.0 619.45L628.8 616.25L632.5 619.45L636.2 616.25L640.0 619.45L643.8 616.25L647.5 619.45L651.2 616.25L655.0 619.45L658.8 616.25L662.5 619.45L666.2 616.25L670.0 619.45L673.8 616.25L677.5 619.45L681.2 616.25L685.0 619.45L688.8 616.25L692.5 619.45L696.2 616.25L700.0 619.45L703.8 616.25L707.5 619.45L711.2 616.25L715.0 619.45L718.8 616.25L722.5 619.45L726.2 616.25L730.0 619.45L733.8 616.25L737.5 619.45L741.2 616.25L745.0 619.45L748.8 616.25L752.5 619.45L756.2 616.25L760.0 619.45L763.8 616.25L767.5 619.45L771.2 616.25L775.0 619.45L778.8 616.25L782.5 619.45L786.2 616.25L790.0 619.45L793.8 616.25L797.5 619.45L801.2 616.25L805.0 619.45L808.8 616.25L812.5 619.45L816.2 616.25L820.0 619.45L823.8 616.25L827.5 619.45L831.2 616.25L835.0 619.45L838.8 616.25L842.5 619.45L846.2 616.25L850.0 619.45L853.8 616.25L857.5 619.45L861.2 616.25L865.0 619.45L868.8 616.25L872.5 619.45L876.2 616.25L880.0 619.45L883.8 616.25L887.5 619.45L891.2 616.25L895.0 619.45L898.8 616.25L902.5 619.45L906.2 616.25L910.0 619.45L913.8 616.25L917.5 619.45L921.2 616.25L924.2 618.78" fill="none" stroke="#e51400" stroke-width="1.2" stroke-linejoin="round"/><path d="M145.0 643.20L148.8 640.00L152.5 643.20L156.2 640.00L160.0 643.20L163.8 640.00L167.5 643.20L171.2 640.00L175.0 643.20L178.8 640.00L182.5 643.20L186.2 640.00L190.0 643.20L193.8 640.00L197.5 643.20L201.2 640.00L205.0 643.20L208.8 640.00L212.5 643.20L216.2 640.00L220.0 643.20L223.8 640.00L227.5 643.20L231.2 640.00L235.0 643.20L238.8 640.00L242.5 643.20L246.2 640.00L250.0 643.20L253.8 640.00L257.5 643.20L261.2 640.00L265.0 643.20L268.8 640.00L272.5 643.20L276.2 640.00L280.0 643.20L283.8 640.00L287.5 643.20L291.2 640.00L295.0 643.20L298.8 640.00L302.5 643.20L306.2 640.00L310.0 643.20L313.8 640.00L317.5 643.20L321.2 640.00L325.0 643.20L328.8 640.00L332.5 643.20L336.2 640.00L340.0 643.20L343.8 640.00L347.5 643.20L351.2 640.00L355.0 643.20L358.8 640.00L362.5 643.20L366.2 640.00L370.0 643.20L373.8 640.00L377.5 643.20L381.2 640.00L385.0 643.20L388.8 640.00L392.5 643.20L396.2 640.00L400.0 643.20L403.8 640.00L407.5 643.20L411.2 640.00L415.0 643.20L418.8 640.00L422.5 643.20L426.2 640.00L430.0 643.20L433.8 640.00L437.5 643.20L441.2 640.00L445.0 643.20L448.8 640.00L452.5 643.20L456.2 640.00L460.0 643.20L463.8 640.00L467.5 643.20L471.2 640.00L475.0 643.20L478.8 640.00L482.5 643.20L486.2 640.00L490.0 643.20L493.8 640.00L497.5 643.20L501.2 640.00L505.0 643.20L508.8 640.00L512.5 643.20L516.2 640.00L520.0 643.20L523.8 640.00L527.5 643.20L531.2 640.00L535.0 643.20L538.8 640.00L542.5 643.20L546.2 640.00L550.0 643.20L553.8 640.00L557.5 643.20L561.2 640.00L565.0 643.20L568.8 640.00L572.5 643.20L576.2 640.00L577.9 641.41" fill="none" stroke="#e51400" stroke-width="1.2" stroke-linejoin="round"/><path d="M145.0 666.95L148.8 663.75L152.5 666.95L156.2 663.75L160.0 666.95L163.8 663.75L167.5 666.95L171.2 663.75L175.0 666.95L178.8 663.75L182.5 666.95L186.2 663.75L190.0 666.95L193.8 663.75L197.5 666.95L201.2 663.75L205.0 666.95L208.8 663.75L212.5 666.95L216.2 663.75L220.0 666.95L223.8 663.75L227.5 666.95L231.2 663.75L235.0 666.95L238.8 663.75L242.5 666.95L246.2 663.75L250.0 666.95L253.8 663.75L257.5 666.95L261.2 663.75L265.0 666.95L268.8 663.75L272.5 666.95L276.2 663.75L279.7 666.68" fill="none" stroke="#e51400" stroke-width="1.2" stroke-linejoin="round"/><path d="M356.6 666.95L360.4 663.75L364.1 666.95L367.9 663.75L371.6 666.95L375.4 663.75L375.9 664.17" fill="none" stroke="#e51400" stroke-width="1.2" stroke-linejoin="round"/><path d="M549.0 666.95L552.8 663.75L556.5 666.95L560.3 663.75L564.0 666.95L567.8 663.75L571.5 666.95L575.3 663.75L579.0 666.95L582.8 663.75L586.5 666.95L590.3 663.75L594.0 666.95L597.8 663.75L601.5 666.95L605.3 663.75L609.0 666.95L612.8 663.75L616.5 666.95L620.3 663.75L624.0 666.95L626.0 665.28" fill="none" stroke="#e51400" stroke-width="1.2" stroke-linejoin="round"/><path d="M395.1 690.70L398.9 687.50L402.6 690.70L406.4 687.50L410.1 690.70L413.9 687.50L417.6 690.70L421.4 687.50L425.1 690.70L428.9 687.50L432.6 690.70L436.4 687.50L440.1 690.70L443.9 687.50L447.6 690.70L451.4 687.50L452.8 688.75" fill="none" stroke="#e51400" stroke-width="1.2" stroke-linejoin="round"/><path d="M289.3 714.45L293.0 711.25L296.8 714.45L300.5 711.25L304.3 714.45L308.0 711.25L311.8 714.45L315.5 711.25L319.3 714.45L323.0 711.25L326.8 714.45L330.5 711.25L334.3 714.45L337.4 711.80" fill="none" stroke="#e51400" stroke-width="1.2" stroke-linejoin="round"/><path d="M645.2 714.45L649.0 711.25L652.7 714.45L656.5 711.25L660.2 714.45L664.0 711.25L667.7 714.45L671.5 711.25L675.2 714.45L679.0 711.25L682.7 714.45L686.5 711.25L690.2 714.45L694.0 711.25L697.7 714.45L701.5 711.25L705.2 714.45L709.0 711.25L712.7 714.45L716.5 711.25L720.2 714.45L722.2 712.78" fill="none" stroke="#e51400" stroke-width="1.2" stroke-linejoin="round"/><path d="M308.5 738.20L312.3 735.00L316.0 738.20L318.2 736.39" fill="none" stroke="#e51400" stroke-width="1.2" stroke-linejoin="round"/><path d="M597.1 738.20L600.9 735.00L604.6 738.20L608.4 735.00L612.1 738.20L615.9 735.00L619.6 738.20L623.4 735.00L627.1 738.20L630.9 735.00L634.6 738.20L638.4 735.00L642.1 738.20L645.9 735.00L649.6 738.20L653.4 735.00L657.1 738.20L660.9 735.00L664.6 738.20L668.4 735.00L672.1 738.20L675.9 735.00L679.6 738.20L683.4 735.00L687.1 738.20L690.9 735.00L694.6 738.20L698.4 735.00L702.1 738.20L705.9 735.00L709.6 738.20L713.4 735.00L717.1 738.20L720.9 735.00L724.6 738.20L728.4 735.00L732.1 738.20L735.9 735.00L739.6 738.20L743.4 735.00L747.1 738.20L750.9 735.00L751.1 735.15" fill="none" stroke="#e51400" stroke-width="1.2" stroke-linejoin="round"/><path d="M395.1 856.95L398.9 853.75L402.6 856.95L406.4 853.75L410.1 856.95L413.9 853.75L417.6 856.95L421.4 853.75L425.1 856.95L428.9 853.75L432.6 856.95L436.4 853.75L440.1 856.95L443.9 853.75L447.6 856.95L451.4 853.75L452.8 855.00" fill="none" stroke="#e51400" stroke-width="1.2" stroke-linejoin="round"/><path d="M289.3 880.70L293.0 877.50L296.8 880.70L300.5 877.50L304.3 880.70L308.0 877.50L311.8 880.70L315.5 877.50L319.3 880.70L323.0 877.50L326.8 880.70L330.5 877.50L334.3 880.70L337.4 878.05" fill="none" stroke="#e51400" stroke-width="1.2" stroke-linejoin="round"/><path d="M683.7 880.70L687.5 877.50L691.2 880.70L693.3 878.89" fill="none" stroke="#e51400" stroke-width="1.2" stroke-linejoin="round"/><path d="M472.1 904.45L475.8 901.25L479.6 904.45L481.7 902.64" fill="none" stroke="#e51400" stroke-width="1.2" stroke-linejoin="round"/><path d="M760.7 904.45L764.4 901.25L768.2 904.45L771.9 901.25L775.7 904.45L779.4 901.25L783.2 904.45L786.9 901.25L790.7 904.45L794.4 901.25L798.2 904.45L801.9 901.25L805.7 904.45L809.4 901.25L813.2 904.45L816.9 901.25L820.7 904.45L824.4 901.25L828.2 904.45L831.9 901.25L835.7 904.45L839.4 901.25L843.2 904.45L846.9 901.25L850.7 904.45L854.4 901.25L858.2 904.45L861.9 901.25L865.7 904.45L869.4 901.25L873.2 904.45L876.1 901.94" fill="none" stroke="#e51400" stroke-width="1.2" stroke-linejoin="round"/><path d="M895.4 904.45L899.1 901.25L902.9 904.45L905.0 902.64" fill="none" stroke="#e51400" stroke-width="1.2" stroke-linejoin="round"/><path d="M327.8 951.95L331.5 948.75L335.3 951.95L337.4 950.14" fill="none" stroke="#e51400" stroke-width="1.2" stroke-linejoin="round"/><path d="M674.1 951.95L677.8 948.75L681.6 951.95L685.3 948.75L689.1 951.95L692.8 948.75L696.6 951.95L700.3 948.75L704.1 951.95L707.8 948.75L711.6 951.95L712.6 951.11" fill="none" stroke="#e51400" stroke-width="1.2" stroke-linejoin="round"/><path d="M424.0 975.70L427.7 972.50L431.5 975.70L433.6 973.89" fill="none" stroke="#e51400" stroke-width="1.2" stroke-linejoin="round"/><path d="M481.7 975.70L485.4 972.50L489.2 975.70L492.9 972.50L496.7 975.70L500.4 972.50L504.2 975.70L507.9 972.50L511.7 975.70L515.5 972.50L519.2 975.70L523.0 972.50L526.7 975.70L530.5 972.50L534.2 975.70L538.0 972.50L539.4 973.75" fill="none" stroke="#e51400" stroke-width="1.2" stroke-linejoin="round"/><path d="M645.2 975.70L649.0 972.50L652.7 975.70L656.5 972.50L660.2 975.70L664.0 972.50L667.7 975.70L671.5 972.50L675.2 975.70L679.0 972.50L682.7 975.70L686.5 972.50L690.2 975.70L694.0 972.50L697.7 975.70L701.5 972.50L705.2 975.70L709.0 972.50L712.7 975.70L716.5 972.50L720.2 975.70L724.0 972.50L727.7 975.70L731.5 972.50L731.8 972.78" fill="none" stroke="#e51400" stroke-width="1.2" stroke-linejoin="round"/><path d="M308.5 999.45L312.3 996.25L316.0 999.45L318.2 997.64" fill="none" stroke="#e51400" stroke-width="1.2" stroke-linejoin="round"/><path d="M654.9 999.45L658.6 996.25L662.4 999.45L666.1 996.25L669.9 999.45L673.6 996.25L677.4 999.45L681.1 996.25L684.9 999.45L688.6 996.25L692.4 999.45L693.3 998.61" fill="none" stroke="#e51400" stroke-width="1.2" stroke-linejoin="round"/><path d="M395.1 1023.20L398.9 1020.00L402.6 1023.20L406.4 1020.00L410.1 1023.20L413.9 1020.00L417.6 1023.20L421.4 1020.00L424.0 1022.23" fill="none" stroke="#e51400" stroke-width="1.2" stroke-linejoin="round"/><path d="M722.2 1023.20L725.9 1020.00L729.7 1023.20L733.4 1020.00L737.2 1023.20L740.9 1020.00L741.4 1020.42" fill="none" stroke="#e51400" stroke-width="1.2" stroke-linejoin="round"/><path d="M510.6 1046.95L514.3 1043.75L518.1 1046.95L520.2 1045.14" fill="none" stroke="#e51400" stroke-width="1.2" stroke-linejoin="round"/><path d="M731.8 1046.95L735.6 1043.75L739.3 1046.95L743.1 1043.75L746.8 1046.95L750.6 1043.75L754.3 1046.95L758.1 1043.75L761.8 1046.95L765.6 1043.75L769.3 1046.95L770.3 1046.11" fill="none" stroke="#e51400" stroke-width="1.2" stroke-linejoin="round"/><path d="M779.9 1046.95L783.7 1043.75L787.4 1046.95L791.2 1043.75L794.9 1046.95L798.7 1043.75L802.4 1046.95L806.2 1043.75L809.9 1046.95L813.7 1043.75L817.4 1046.95L818.4 1046.11" fill="none" stroke="#e51400" stroke-width="1.2" stroke-linejoin="round"/><path d="M261.8 112.35H270.5M267.3 109.75L270.5 112.35L267.3 114.95M242.6 136.10H251.3M248.1 133.50L251.3 136.10L248.1 138.70M261.8 136.10H270.5M267.3 133.50L270.5 136.10L267.3 138.70M309.9 136.10H318.6M315.4 133.50L318.6 136.10L315.4 138.70M338.8 136.10H347.5M344.3 133.50L347.5 136.10L344.3 138.70M377.3 136.10H386.0M382.8 133.50L386.0 136.10L382.8 138.70M415.8 136.10H424.5M421.3 133.50L424.5 136.10L421.3 138.70M348.4 159.85H357.1M353.9 157.25L357.1 159.85L353.9 162.45M377.3 159.85H386.0M382.8 157.25L386.0 159.85L382.8 162.45M435.0 159.85H443.7M440.5 157.25L443.7 159.85L440.5 162.45M454.2 159.85H462.9M459.7 157.25L462.9 159.85L459.7 162.45M415.8 204.10H424.5M421.3 201.50L424.5 204.10L421.3 206.70M454.2 204.10H462.9M459.7 201.50L462.9 204.10L459.7 206.70M492.7 204.10H501.4M498.2 201.50L501.4 204.10L498.2 206.70M348.4 227.85H357.1M353.9 225.25L357.1 227.85L353.9 230.45M377.3 227.85H386.0M382.8 225.25L386.0 227.85L382.8 230.45M415.8 227.85H424.5M421.3 225.25L424.5 227.85L421.3 230.45M454.2 227.85H462.9M459.7 225.25L462.9 227.85L459.7 230.45M502.3 227.85H511.0M507.8 225.25L511.0 227.85L507.8 230.45M531.2 227.85H539.9M536.7 225.25L539.9 227.85L536.7 230.45M482.3 251.60H491.1M487.9 249.00L491.1 251.60L487.9 254.20M512.0 251.60H520.7M517.5 249.00L520.7 251.60L517.5 254.20M386.9 275.35H395.6M392.4 272.75L395.6 275.35L392.4 277.95M415.8 275.35H424.5M421.3 272.75L424.5 275.35L421.3 277.95M454.2 275.35H462.9M459.7 272.75L462.9 275.35L459.7 277.95M502.3 275.35H511.0M507.8 272.75L511.0 275.35L507.8 277.95M540.8 275.35H549.5M546.3 272.75L549.5 275.35L546.3 277.95M473.5 299.10H482.2M479.0 296.50L482.2 299.10L479.0 301.70M540.8 299.10H549.5M546.3 296.50L549.5 299.10L546.3 301.70M435.0 322.85H443.7M440.5 320.25L443.7 322.85L440.5 325.45M454.2 322.85H462.9M459.7 320.25L462.9 322.85L459.7 325.45M502.3 322.85H511.0M507.8 320.25L511.0 322.85L507.8 325.45M531.2 322.85H539.9M536.7 320.25L539.9 322.85L536.7 325.45M579.3 322.85H588.0M584.8 320.25L588.0 322.85L584.8 325.45M454.2 346.60H462.9M459.7 344.00L462.9 346.60L459.7 349.20M492.7 346.60H501.4M498.2 344.00L501.4 346.60L498.2 349.20M559.3 346.60H568.1M564.9 344.00L568.1 346.60L564.9 349.20M443.8 370.35H452.6M449.4 367.75L452.6 370.35L449.4 372.95M463.9 370.35H472.6M469.4 367.75L472.6 370.35L469.4 372.95M492.7 370.35H501.4M498.2 367.75L501.4 370.35L498.2 372.95M531.2 370.35H539.9M536.7 367.75L539.9 370.35L536.7 372.95M569.7 370.35H578.4M575.2 367.75L578.4 370.35L575.2 372.95M608.2 370.35H616.9M613.7 367.75L616.9 370.35L613.7 372.95M415.8 394.10H424.5M421.3 391.50L424.5 394.10L421.3 396.70M454.2 394.10H462.9M459.7 391.50L462.9 394.10L459.7 396.70M492.7 394.10H501.4M498.2 391.50L501.4 394.10L498.2 396.70M540.8 394.10H549.5M546.3 391.50L549.5 394.10L546.3 396.70M348.4 417.85H357.1M353.9 415.25L357.1 417.85L353.9 420.45M377.3 417.85H386.0M382.8 415.25L386.0 417.85L382.8 420.45M415.8 417.85H424.5M421.3 415.25L424.5 417.85L421.3 420.45M473.5 417.85H482.2M479.0 415.25L482.2 417.85L479.0 420.45M454.2 441.60H462.9M459.7 439.00L462.9 441.60L459.7 444.20M492.7 441.60H501.4M498.2 439.00L501.4 441.60L498.2 444.20M531.2 441.60H539.9M536.7 439.00L539.9 441.60L536.7 444.20M579.3 441.60H588.0M584.8 439.00L588.0 441.60L584.8 444.20M617.8 441.60H626.5M623.3 439.00L626.5 441.60L623.3 444.20M559.3 465.35H568.1M564.9 462.75L568.1 465.35L564.9 467.95M569.7 465.35H578.4M575.2 462.75L578.4 465.35L575.2 467.95M636.2 465.35H645.0M641.8 462.75L645.0 465.35L641.8 467.95M473.5 489.10H482.2M479.0 486.50L482.2 489.10L479.0 491.70M492.7 489.10H501.4M498.2 486.50L501.4 489.10L498.2 491.70M531.2 489.10H539.9M536.7 486.50L539.9 489.10L536.7 491.70M569.7 489.10H578.4M575.2 486.50L578.4 489.10L575.2 491.70M627.4 489.10H636.1M632.9 486.50L636.1 489.10L632.9 491.70M425.4 512.85H434.1M430.9 510.25L434.1 512.85L430.9 515.45M463.9 512.85H472.6M469.4 510.25L472.6 512.85L469.4 515.45M492.7 512.85H501.4M498.2 510.25L501.4 512.85L498.2 515.45M531.2 512.85H539.9M536.7 510.25L539.9 512.85L536.7 515.45M569.7 512.85H578.4M575.2 510.25L578.4 512.85L575.2 515.45M608.2 512.85H616.9M613.7 510.25L616.9 512.85L613.7 515.45M588.9 536.60H597.6M594.4 534.00L597.6 536.60L594.4 539.20M608.2 536.60H616.9M613.7 534.00L616.9 536.60L613.7 539.20M674.7 536.60H683.5M680.3 534.00L683.5 536.60L680.3 539.20M685.1 536.60H693.8M690.6 534.00L693.8 536.60L690.6 539.20M597.7 560.35H606.6M603.4 557.75L606.6 560.35L603.4 562.95M608.2 560.35H616.9M613.7 557.75L616.9 560.35L613.7 562.95M656.3 560.35H665.0M661.8 557.75L665.0 560.35L661.8 562.95M492.7 584.10H501.4M498.2 581.50L501.4 584.10L498.2 586.70M531.2 584.10H539.9M536.7 581.50L539.9 584.10L536.7 586.70M579.3 584.10H588.0M584.8 581.50L588.0 584.10L584.8 586.70M608.2 584.10H616.9M613.7 581.50L616.9 584.10L613.7 586.70M646.6 584.10H655.3M652.1 581.50L655.3 584.10L652.1 586.70M579.3 607.85H588.0M584.8 605.25L588.0 607.85L584.8 610.45M608.2 607.85H616.9M613.7 605.25L616.9 607.85L613.7 610.45M656.3 607.85H665.0M661.8 605.25L665.0 607.85L661.8 610.45M685.1 607.85H693.8M690.6 605.25L693.8 607.85L690.6 610.45M723.6 607.85H732.3M729.1 605.25L732.3 607.85L729.1 610.45M377.3 631.60H386.0M382.8 629.00L386.0 631.60L382.8 634.20M415.8 631.60H424.5M421.3 629.00L424.5 631.60L421.3 634.20M386.9 655.35H395.6M392.4 652.75L395.6 655.35L392.4 657.95M415.8 655.35H424.5M421.3 652.75L424.5 655.35L421.3 657.95M454.2 655.35H462.9M459.7 652.75L462.9 655.35L459.7 657.95M502.3 655.35H511.0M507.8 652.75L511.0 655.35L507.8 657.95M463.9 679.10H472.6M469.4 676.50L472.6 679.10L469.4 681.70M502.3 679.10H511.0M507.8 676.50L511.0 679.10L507.8 681.70M531.2 679.10H539.9M536.7 676.50L539.9 679.10L536.7 681.70M569.7 679.10H578.4M575.2 676.50L578.4 679.10L575.2 681.70M608.2 679.10H616.9M613.7 676.50L616.9 679.10L613.7 681.70M646.6 679.10H655.3M652.1 676.50L655.3 679.10L652.1 681.70M473.5 702.85H482.2M479.0 700.25L482.2 702.85L479.0 705.45M492.7 702.85H501.4M498.2 700.25L501.4 702.85L498.2 705.45M540.8 702.85H549.5M546.3 700.25L549.5 702.85L546.3 705.45M569.7 702.85H578.4M575.2 700.25L578.4 702.85L575.2 705.45M617.8 702.85H626.5M623.3 700.25L626.5 702.85L623.3 705.45M627.4 726.60H636.1M632.9 724.00L636.1 726.60L632.9 729.20M646.6 726.60H655.3M652.1 724.00L655.3 726.60L652.1 729.20M694.7 726.60H703.4M700.2 724.00L703.4 726.60L700.2 729.20M435.0 750.35H443.7M440.5 747.75L443.7 750.35L440.5 752.95M454.2 750.35H462.9M459.7 747.75L462.9 750.35L459.7 752.95M502.3 750.35H511.0M507.8 747.75L511.0 750.35L507.8 752.95M540.8 750.35H549.5M546.3 747.75L549.5 750.35L546.3 752.95M569.7 750.35H578.4M575.2 747.75L578.4 750.35L575.2 752.95M425.4 774.10H434.1M430.9 771.50L434.1 774.10L430.9 776.70M454.2 774.10H462.9M459.7 771.50L462.9 774.10L459.7 776.70M512.0 774.10H520.7M517.5 771.50L520.7 774.10L517.5 776.70M540.8 774.10H549.5M546.3 771.50L549.5 774.10L546.3 776.70M386.9 797.85H395.6M392.4 795.25L395.6 797.85L392.4 800.45M425.4 797.85H434.1M430.9 795.25L434.1 797.85L430.9 800.45M454.2 797.85H462.9M459.7 795.25L462.9 797.85L459.7 800.45M492.7 797.85H501.4M498.2 795.25L501.4 797.85L498.2 800.45M531.2 797.85H539.9M536.7 795.25L539.9 797.85L536.7 800.45M569.7 797.85H578.4M575.2 795.25L578.4 797.85L575.2 800.45M396.5 821.60H405.2M402.0 819.00L405.2 821.60L402.0 824.20M415.8 821.60H424.5M421.3 819.00L424.5 821.60L421.3 824.20M454.2 821.60H462.9M459.7 819.00L462.9 821.60L459.7 824.20M512.0 821.60H520.7M517.5 819.00L520.7 821.60L517.5 824.20M531.2 821.60H539.9M536.7 819.00L539.9 821.60L536.7 824.20M463.9 845.35H472.6M469.4 842.75L472.6 845.35L469.4 847.95M492.7 845.35H501.4M498.2 842.75L501.4 845.35L498.2 847.95M550.4 845.35H559.1M555.9 842.75L559.1 845.35L555.9 847.95M579.3 845.35H588.0M584.8 842.75L588.0 845.35L584.8 847.95M443.8 869.10H452.6M449.4 866.50L452.6 869.10L449.4 871.70M454.2 869.10H462.9M459.7 866.50L462.9 869.10L459.7 871.70M502.3 869.10H511.0M507.8 866.50L511.0 869.10L507.8 871.70M531.2 869.10H539.9M536.7 866.50L539.9 869.10L536.7 871.70M569.7 869.10H578.4M575.2 866.50L578.4 869.10L575.2 871.70M569.7 892.85H578.4M575.2 890.25L578.4 892.85L575.2 895.45M608.2 892.85H616.9M613.7 890.25L616.9 892.85L613.7 895.45M646.6 892.85H655.3M652.1 890.25L655.3 892.85L652.1 895.45M704.4 892.85H713.1M709.9 890.25L713.1 892.85L709.9 895.45M723.6 892.85H732.3M729.1 890.25L732.3 892.85L729.1 895.45M435.0 916.60H443.7M440.5 914.00L443.7 916.60L440.5 919.20M454.2 916.60H462.9M459.7 914.00L462.9 916.60L459.7 919.20M512.0 916.60H520.7M517.5 914.00L520.7 916.60L517.5 919.20M540.8 916.60H549.5M546.3 914.00L549.5 916.60L546.3 919.20M435.0 940.35H443.7M440.5 937.75L443.7 940.35L440.5 942.95M463.9 940.35H472.6M469.4 937.75L472.6 940.35L469.4 942.95M492.7 940.35H501.4M498.2 937.75L501.4 940.35L498.2 942.95M531.2 940.35H539.9M536.7 937.75L539.9 940.35L536.7 942.95M569.7 940.35H578.4M575.2 937.75L578.4 940.35L575.2 942.95M608.2 940.35H616.9M613.7 937.75L616.9 940.35L613.7 942.95M559.3 964.10H568.1M564.9 961.50L568.1 964.10L564.9 966.70M569.7 964.10H578.4M575.2 961.50L578.4 964.10L575.2 966.70M502.3 987.85H511.0M507.8 985.25L511.0 987.85L507.8 990.45M531.2 987.85H539.9M536.7 985.25L539.9 987.85L536.7 990.45M588.9 987.85H597.6M594.4 985.25L597.6 987.85L594.4 990.45M608.2 987.85H616.9M613.7 985.25L616.9 987.85L613.7 990.45M482.3 1011.60H491.1M487.9 1009.00L491.1 1011.60L487.9 1014.20M502.3 1011.60H511.0M507.8 1009.00L511.0 1011.60L507.8 1014.20M531.2 1011.60H539.9M536.7 1009.00L539.9 1011.60L536.7 1014.20M569.7 1011.60H578.4M575.2 1009.00L578.4 1011.60L575.2 1014.20M608.2 1011.60H616.9M613.7 1009.00L616.9 1011.60L613.7 1014.20M646.6 1011.60H655.3M652.1 1009.00L655.3 1011.60L652.1 1014.20M636.2 1035.35H645.0M641.8 1032.75L645.0 1035.35L641.8 1037.95M665.9 1035.35H674.6M671.4 1032.75L674.6 1035.35L671.4 1037.95M694.7 1035.35H703.4M700.2 1032.75L703.4 1035.35L700.2 1037.95M520.8 1059.10H529.6M526.4 1056.50L529.6 1059.10L526.4 1061.70M540.8 1059.10H549.5M546.3 1056.50L549.5 1059.10L546.3 1061.70M569.7 1059.10H578.4M575.2 1056.50L578.4 1059.10L575.2 1061.70M608.2 1059.10H616.9M613.7 1056.50L616.9 1059.10L613.7 1061.70M646.6 1059.10H655.3M652.1 1056.50L655.3 1059.10L652.1 1061.70M685.1 1059.10H693.8M690.6 1056.50L693.8 1059.10L690.6 1061.70" fill="none" stroke="#56687a" stroke-opacity=".42" stroke-width="1"/></svg>
<div class="ln" style="top:-13.75px"><i style="left:19.24px">··········</i><i style="left:192.40px">·</i><span style="left:0.00px;color:#000000">im</span><span style="left:153.92px;color:#000000">port</span><span style="left:202.02px;color:#001080">java.util.Base64</span><span style="left:355.94px;color:#000000">;</span></div>
<div class="num" style="top:-13.75px">1</div>
<div class="ln" style="top:10.00px"><i style="left:57.72px">·</i><i style="left:86.58px">·</i><i style="left:153.92px">·</i><span style="left:0.00px;color:#0000ff">import</span><span style="left:67.34px;color:#267f99">ja</span><span style="left:307.84px;color:#000000">va.util.Random;</span></div>
<div class="num" style="top:10.00px">2</div>
<div class="ln" style="top:33.75px"><i style="left:57.72px">·</i><i style="left:115.44px">·</i><i style="left:192.40px">·</i><i style="left:269.36px">··</i><i style="left:346.32px">·</i><i style="left:423.28px">·</i><span style="left:0.00px;color:#0000ff">public</span><span style="left:67.34px;color:#0000ff">class</span><span style="left:125.06px;color:#267f99">Encrypt</span><span style="left:355.94px;color:#000000">ionDemo</span><span style="left:432.90px;color:#0431fa">{</span></div>
<div class="num" style="top:33.75px">3</div>
<div class="ln" style="top:77.20px"><i style="left:0.00px">····</i><i style="left:96.20px">·</i><i style="left:163.54px">·</i><i style="left:211.64px">·</i><i style="left:259.74px">·</i><i style="left:384.80px">····</i><i style="left:509.86px">·</i><i style="left:567.58px">·</i><span style="left:38.48px;color:#0000ff">public</span><span style="left:105.82px;color:#0000ff">static</span><span style="left:173.16px;color:#267f99">void</span><span style="left:221.26px;color:#795e26">main</span><span style="left:423.28px;color:#319331">(</span><span style="left:432.90px;color:#267f99">String</span><span style="left:490.62px;color:#7b3814">[]</span><span style="left:519.48px;color:#001080">args</span><span style="left:557.96px;color:#319331">)</span><span style="left:577.20px;color:#319331">{</span></div>
<div class="num" style="top:77.20px">4</div>
<div class="ln" style="top:100.95px"><i style="left:0.00px">········</i><i style="left:134.68px">·</i><i style="left:192.40px">·</i><i style="left:346.32px">·</i><i style="left:461.76px">·</i><i style="left:481.00px">·</i><span style="left:76.96px;color:#267f99">String</span><span style="left:144.30px;color:#000000">input</span><span style="left:423.28px;color:#001080">Data</span><span style="left:471.38px;color:#000000">=</span><span style="left:490.62px;color:#a31515">&quot;SecretMessage123&quot;</span><span style="left:663.78px;color:#000000">;</span></div>
<div class="num" style="top:100.95px">5</div>
<div class="ln" style="top:124.70px"><i style="left:0.00px">········</i><i style="left:134.68px">·</i><i style="left:230.88px">·</i><i style="left:250.12px">·</i><i style="left:327.08px">·</i><i style="left:346.32px">··</i><i style="left:384.80px">···</i><span style="left:76.96px;color:#267f99">String</span><span style="left:144.30px;color:#000000">processed</span><span style="left:240.50px;color:#000000">=</span><span style="left:259.74px;color:#267f99">process</span><span style="left:413.66px;color:#795e26">Data</span><span style="left:452.14px;color:#7b3814">(</span><span style="left:461.76px;color:#000000">inputData</span><span style="left:548.34px;color:#7b3814">)</span><span style="left:557.96px;color:#000000">;</span></div>
<div class="num" style="top:124.70px">6</div>
<div class="ln" style="top:148.45px"><i style="left:0.00px">········</i><i style="left:230.88px">·</i><i style="left:346.32px">·</i><i style="left:384.80px">·</i><i style="left:519.48px">·</i><i style="left:538.72px">·</i><i style="left:634.92px">·</i><i style="left:654.16px">·</i><span style="left:76.96px;color:#267f99">System</span><span style="left:134.68px;color:#000000">.</span><span style="left:144.30px;color:#267f99">out</span><span style="left:173.16px;color:#000000">.</span><span style="left:182.78px;color:#267f99">print</span><span style="left:423.28px;color:#795e26">ln</span><span style="left:442.52px;color:#7b3814">(</span><span style="left:452.14px;color:#a31515">&quot;pofp{&quot;</span><span style="left:529.10px;color:#000000">+</span><span style="left:548.34px;color:#000000">processed</span><span style="left:644.54px;color:#000000">+</span><span style="left:663.78px;color:#a31515">&quot;}&quot;</span><span style="left:692.64px;color:#7b3814">)</span><span style="left:702.26px;color:#000000">;</span><span style="left:711.88px;color:#319331">}</span></div>
<div class="num" style="top:148.45px">7</div>
<div class="ln" style="top:172.20px"><i style="left:0.00px">····</i><i style="left:105.82px">·</i><i style="left:173.16px">·</i><i style="left:240.50px">·</i><i style="left:317.46px">·</i><i style="left:346.32px">·····</i><i style="left:529.10px">·</i><i style="left:586.82px">·</i><span style="left:38.48px;color:#0000ff">private</span><span style="left:115.44px;color:#0000ff">static</span><span style="left:182.78px;color:#267f99">String</span><span style="left:250.12px;color:#001080">process</span><span style="left:423.28px;color:#795e26">Data</span><span style="left:461.76px;color:#319331">(</span><span style="left:471.38px;color:#267f99">String</span><span style="left:538.72px;color:#001080">data</span><span style="left:577.20px;color:#319331">)</span><span style="left:596.44px;color:#319331">{</span></div>
<div class="num" style="top:172.20px">8</div>
<div class="ln" style="top:195.95px"><i style="left:0.00px">········</i><i style="left:134.68px">·</i><i style="left:202.02px">·</i><i style="left:221.26px">·</i><i style="left:278.98px">·</i><i style="left:346.32px">·</i><i style="left:423.28px">·</i><i style="left:654.16px">·</i><span style="left:76.96px;color:#267f99">String</span><span style="left:144.30px;color:#001080">phase1</span><span style="left:211.64px;color:#000000">=</span><span style="left:230.88px;color:#267f99">apply</span><span style="left:461.76px;color:#795e26">Transformation</span><span style="left:596.44px;color:#7b3814">(</span><span style="left:606.06px;color:#000000">data</span><span style="left:644.54px;color:#000000">,</span><span style="left:663.78px;color:#098658">7</span><span style="left:673.40px;color:#7b3814">)</span><span style="left:683.02px;color:#000000">;</span></div>
<div class="num" style="top:195.95px">9</div>
<div class="ln" style="top:219.70px"><i style="left:0.00px">········</i><i style="left:134.68px">·</i><i style="left:202.02px">·</i><i style="left:221.26px">·</i><i style="left:288.60px">··</i><i style="left:384.80px">···</i><span style="left:76.96px;color:#267f99">String</span><span style="left:144.30px;color:#001080">phase2</span><span style="left:211.64px;color:#000000">=</span><span style="left:230.88px;color:#267f99">invert</span><span style="left:423.28px;color:#795e26">Sequence</span><span style="left:500.24px;color:#7b3814">(</span><span style="left:509.86px;color:#000000">phase1</span><span style="left:567.58px;color:#7b3814">)</span><span style="left:577.20px;color:#000000">;</span></div>
<div class="num" style="top:219.70px">10</div>
<div class="ln" style="top:243.45px"><i style="left:0.00px">········</i><i style="left:134.68px">·</i><i style="left:202.02px">·</i><i style="left:221.26px">·</i><i style="left:288.60px">·</i><i style="left:307.84px">·</i><span style="left:76.96px;color:#267f99">String</span><span style="left:144.30px;color:#001080">phase3</span><span style="left:211.64px;color:#000000">=</span><span style="left:230.88px;color:#267f99">encode</span><span style="left:500.24px;color:#795e26">Base64</span><span style="left:557.96px;color:#7b3814">(</span><span style="left:567.58px;color:#000000">phase2</span><span style="left:625.30px;color:#7b3814">)</span><span style="left:634.92px;color:#000000">;</span></div>
<div class="num" style="top:243.45px">11</div>
<div class="ln" style="top:267.20px"><i style="left:0.00px">········</i><i style="left:134.68px">·</i><i style="left:202.02px">·</i><i style="left:221.26px">·</i><i style="left:259.74px">·</i><i style="left:384.80px">·</i><i style="left:423.28px">··</i><i style="left:586.82px">·</i><span style="left:76.96px;color:#267f99">String</span><span style="left:144.30px;color:#001080">phase4</span><span style="left:211.64px;color:#000000">=</span><span style="left:230.88px;color:#267f99">add</span><span style="left:442.52px;color:#795e26">Padding</span><span style="left:509.86px;color:#7b3814">(</span><span style="left:519.48px;color:#000000">phase3</span><span style="left:577.20px;color:#000000">,</span><span style="left:596.44px;color:#098658">2</span><span style="left:606.06px;color:#7b3814">)</span><span style="left:615.68px;color:#000000">;</span></div>
<div class="num" style="top:267.20px">12</div>
<div class="ln" style="top:290.95px"><i style="left:0.00px">········</i><i style="left:134.68px">·</i><i style="left:192.40px">·</i><i style="left:307.84px">··</i><i style="left:346.32px">·</i><span style="left:76.96px;color:#af00db">return</span><span style="left:144.30px;color:#000000">phase</span><span style="left:355.94px;color:#098658">4</span><span style="left:365.56px;color:#000000">;</span><span style="left:375.18px;color:#319331">}</span></div>
<div class="num" style="top:290.95px">13</div>
<div class="ln" style="top:314.70px"><i style="left:0.00px">····</i><i style="left:105.82px">·</i><i style="left:173.16px">·</i><i style="left:240.50px">·</i><i style="left:298.22px">·</i><i style="left:423.28px">·</i><i style="left:461.76px">·</i><i style="left:702.26px">·</i><i style="left:750.36px">·</i><i style="left:788.84px">·</i><i style="left:836.94px">·</i><span style="left:38.48px;color:#0000ff">private</span><span style="left:115.44px;color:#0000ff">static</span><span style="left:182.78px;color:#267f99">String</span><span style="left:250.12px;color:#001080">apply</span><span style="left:500.24px;color:#795e26">Transformation</span><span style="left:634.92px;color:#319331">(</span><span style="left:644.54px;color:#267f99">String</span><span style="left:711.88px;color:#001080">str</span><span style="left:740.74px;color:#000000">,</span><span style="left:759.98px;color:#267f99">int</span><span style="left:798.46px;color:#001080">key</span><span style="left:827.32px;color:#319331">)</span><span style="left:846.56px;color:#319331">{</span></div>
<div class="num" style="top:314.70px">14</div>
<div class="ln" style="top:338.45px"><i style="left:0.00px">········</i><i style="left:202.02px">·</i><i style="left:269.36px">·</i><i style="left:288.60px">·</i><i style="left:327.08px">·</i><i style="left:394.42px">··</i><i style="left:461.76px">···</i><span style="left:76.96px;color:#267f99">StringBuilder</span><span style="left:211.64px;color:#001080">output</span><span style="left:278.98px;color:#000000">=</span><span style="left:298.22px;color:#af00db">new</span><span style="left:336.70px;color:#267f99">String</span><span style="left:500.24px;color:#795e26">Builder</span><span style="left:567.58px;color:#7b3814">()</span><span style="left:586.82px;color:#000000">;</span></div>
<div class="num" style="top:338.45px">15</div>
<div class="ln" style="top:362.20px"><i style="left:0.00px">········</i><i style="left:105.82px">·</i><i style="left:163.54px">·</i><i style="left:192.40px">·</i><i style="left:211.64px">·</i><i style="left:317.46px">·</i><i style="left:461.76px">··</i><i style="left:577.20px">·</i><span style="left:76.96px;color:#af00db">for</span><span style="left:115.44px;color:#7b3814">(</span><span style="left:125.06px;color:#267f99">char</span><span style="left:173.16px;color:#001080">ch</span><span style="left:202.02px;color:#af00db">:</span><span style="left:221.26px;color:#267f99">str</span><span style="left:250.12px;color:#000000">.</span><span style="left:259.74px;color:#267f99">toChar</span><span style="left:500.24px;color:#795e26">Array</span><span style="left:548.34px;color:#0431fa">()</span><span style="left:567.58px;color:#7b3814">)</span><span style="left:586.82px;color:#7b3814">{</span></div>
<div class="num" style="top:362.20px">16</div>
<div class="ln" style="top:385.95px"><i style="left:0.00px">············</i><i style="left:134.68px">·</i><i style="left:269.36px">·</i><i style="left:307.84px">·</i><i style="left:606.06px">·</i><span style="left:115.44px;color:#af00db">if</span><span style="left:144.30px;color:#0431fa">(</span><span style="left:153.92px;color:#267f99">Character</span><span style="left:240.50px;color:#000000">.</span><span style="left:250.12px;color:#267f99">is</span><span style="left:500.24px;color:#795e26">Letter</span><span style="left:557.96px;color:#319331">(</span><span style="left:567.58px;color:#000000">ch</span><span style="left:586.82px;color:#319331">)</span><span style="left:596.44px;color:#0431fa">)</span><span style="left:615.68px;color:#0431fa">{</span></div>
<div class="num" style="top:385.95px">17</div>
<div class="ln" style="top:409.70px"><i style="left:0.00px">················</i><i style="left:192.40px">·</i><i style="left:240.50px">·</i><i style="left:259.74px">·</i><i style="left:432.90px">·</i><i style="left:500.24px">···</i><i style="left:654.16px">·</i><i style="left:673.40px">·</i><i style="left:711.88px">·</i><i style="left:731.12px">·</i><span style="left:153.92px;color:#267f99">char</span><span style="left:202.02px;color:#001080">base</span><span style="left:250.12px;color:#000000">=</span><span style="left:269.36px;color:#267f99">Character</span><span style="left:355.94px;color:#000000">.</span><span style="left:365.56px;color:#267f99">isLower</span><span style="left:577.20px;color:#795e26">Case</span><span style="left:615.68px;color:#319331">(</span><span style="left:625.30px;color:#000000">ch</span><span style="left:644.54px;color:#319331">)</span><span style="left:663.78px;color:#af00db">?</span><span style="left:683.02px;color:#a31515">&#x27;a&#x27;</span><span style="left:721.50px;color:#af00db">:</span><span style="left:740.74px;color:#a31515">&#x27;A&#x27;</span><span style="left:769.60px;color:#000000">;</span></div>
<div class="num" style="top:409.70px">18</div>
<div class="ln" style="top:433.45px"><i style="left:0.00px">················</i><i style="left:173.16px">·</i><i style="left:192.40px">·</i><i style="left:307.84px">·</i><i style="left:327.08px">·</i><i style="left:375.18px">·</i><i style="left:394.42px">·</i><i style="left:432.90px">··</i><i style="left:500.24px">·</i><i style="left:538.72px">··</i><i style="left:567.58px">·</i><i style="left:586.82px">·</i><i style="left:625.30px">·</i><i style="left:644.54px">·</i><span style="left:153.92px;color:#000000">ch</span><span style="left:182.78px;color:#000000">=</span><span style="left:202.02px;color:#319331">(</span><span style="left:211.64px;color:#267f99">char</span><span style="left:250.12px;color:#319331">)</span><span style="left:259.74px;color:#319331">(</span><span style="left:269.36px;color:#7b3814">(</span><span style="left:278.98px;color:#0431fa">(</span><span style="left:288.60px;color:#000000">ch</span><span style="left:317.46px;color:#000000">-</span><span style="left:336.70px;color:#000000">base</span><span style="left:384.80px;color:#000000">+</span><span style="left:404.04px;color:#000000">key</span><span style="left:557.96px;color:#0431fa">)</span><span style="left:577.20px;color:#000000">%</span><span style="left:596.44px;color:#098658">26</span><span style="left:615.68px;color:#7b3814">)</span><span style="left:634.92px;color:#000000">+</span><span style="left:654.16px;color:#000000">base</span><span style="left:692.64px;color:#319331">)</span><span style="left:702.26px;color:#000000">;</span></div>
<div class="num" style="top:433.45px">19</div>
<div class="ln" style="top:457.20px"><i style="left:0.00px">············</i><i style="left:125.06px">·</i><i style="left:173.16px">·</i><i style="left:202.02px">·</i><i style="left:336.70px">·</i><i style="left:423.28px">·</i><i style="left:538.72px">·</i><i style="left:644.54px">·</i><span style="left:115.44px;color:#0431fa">}</span><span style="left:134.68px;color:#af00db">else</span><span style="left:182.78px;color:#af00db">if</span><span style="left:211.64px;color:#0431fa">(</span><span style="left:221.26px;color:#267f99">Character</span><span style="left:307.84px;color:#000000">.</span><span style="left:317.46px;color:#267f99">is</span><span style="left:548.34px;color:#795e26">Digit</span><span style="left:596.44px;color:#319331">(</span><span style="left:606.06px;color:#000000">ch</span><span style="left:625.30px;color:#319331">)</span><span style="left:634.92px;color:#0431fa">)</span><span style="left:654.16px;color:#0431fa">{</span></div>
<div class="num" style="top:457.20px">20</div>
<div class="ln" style="top:480.95px"><i style="left:0.00px">················</i><i style="left:173.16px">·</i><i style="left:192.40px">·</i><i style="left:307.84px">·</i><i style="left:327.08px">·</i><i style="left:365.56px">·</i><i style="left:384.80px">·</i><i style="left:423.28px">·</i><i style="left:500.24px">·</i><i style="left:615.68px">·</i><i style="left:634.92px">·</i><i style="left:654.16px">·</i><i style="left:692.64px">·</i><i style="left:711.88px">·</i><span style="left:153.92px;color:#000000">ch</span><span style="left:182.78px;color:#000000">=</span><span style="left:202.02px;color:#319331">(</span><span style="left:211.64px;color:#267f99">char</span><span style="left:250.12px;color:#319331">)</span><span style="left:259.74px;color:#319331">(</span><span style="left:269.36px;color:#7b3814">(</span><span style="left:278.98px;color:#0431fa">(</span><span style="left:288.60px;color:#000000">ch</span><span style="left:317.46px;color:#000000">-</span><span style="left:336.70px;color:#a31515">&#x27;0&#x27;</span><span style="left:375.18px;color:#000000">+</span><span style="left:394.42px;color:#000000">key</span><span style="left:625.30px;color:#0431fa">)</span><span style="left:644.54px;color:#000000">%</span><span style="left:663.78px;color:#098658">10</span><span style="left:683.02px;color:#7b3814">)</span><span style="left:702.26px;color:#000000">+</span><span style="left:721.50px;color:#a31515">&#x27;0&#x27;</span><span style="left:750.36px;color:#319331">)</span><span style="left:759.98px;color:#000000">;</span><span style="left:769.60px;color:#0431fa">}</span></div>
<div class="num" style="top:480.95px">21</div>
<div class="ln" style="top:504.70px"><i style="left:0.00px">············</i><i style="left:211.64px">··</i><i style="left:307.84px">····</i><span style="left:115.44px;color:#267f99">output</span><span style="left:173.16px;color:#000000">.</span><span style="left:182.78px;color:#267f99">app</span><span style="left:346.32px;color:#795e26">end</span><span style="left:375.18px;color:#0431fa">(</span><span style="left:384.80px;color:#000000">ch</span><span style="left:404.04px;color:#0431fa">)</span><span style="left:413.66px;color:#000000">;</span><span style="left:423.28px;color:#7b3814">}</span></div>
<div class="num" style="top:504.70px">22</div>
<div class="ln" style="top:528.45px"><i style="left:0.00px">········</i><i style="left:134.68px">·</i><i style="left:230.88px">·</i><i style="left:346.32px">·</i><i style="left:384.80px">··</i><span style="left:76.96px;color:#af00db">return</span><span style="left:144.30px;color:#267f99">output</span><span style="left:202.02px;color:#000000">.</span><span style="left:211.64px;color:#267f99">to</span><span style="left:404.04px;color:#795e26">String</span><span style="left:461.76px;color:#7b3814">()</span><span style="left:481.00px;color:#000000">;</span><span style="left:490.62px;color:#319331">}</span></div>
<div class="num" style="top:528.45px">23</div>
<div class="ln" style="top:552.20px"><i style="left:0.00px">····</i><i style="left:105.82px">·</i><i style="left:173.16px">·</i><i style="left:240.50px">·</i><i style="left:307.84px">·</i><i style="left:346.32px">·</i><i style="left:683.02px">·</i><i style="left:731.12px">·</i><span style="left:38.48px;color:#0000ff">private</span><span style="left:115.44px;color:#0000ff">static</span><span style="left:182.78px;color:#267f99">String</span><span style="left:250.12px;color:#001080">invert</span><span style="left:538.72px;color:#795e26">Sequence</span><span style="left:615.68px;color:#319331">(</span><span style="left:625.30px;color:#267f99">String</span><span style="left:692.64px;color:#001080">str</span><span style="left:721.50px;color:#319331">)</span><span style="left:740.74px;color:#319331">{</span></div>
<div class="num" style="top:552.20px">24</div>
<div class="ln" style="top:575.95px"><i style="left:0.00px">········</i><i style="left:134.68px">·</i><i style="left:192.40px">·</i><i style="left:211.64px">·</i><i style="left:317.46px">·</i><i style="left:384.80px">·</i><i style="left:461.76px">·</i><span style="left:76.96px;color:#267f99">char</span><span style="left:115.44px;color:#7b3814">[]</span><span style="left:144.30px;color:#001080">chars</span><span style="left:202.02px;color:#000000">=</span><span style="left:221.26px;color:#267f99">str</span><span style="left:250.12px;color:#000000">.</span><span style="left:259.74px;color:#267f99">toChar</span><span style="left:500.24px;color:#795e26">Array</span><span style="left:548.34px;color:#7b3814">()</span><span style="left:567.58px;color:#000000">;</span></div>
<div class="num" style="top:575.95px">25</div>
<div class="ln" style="top:599.70px"><i style="left:0.00px">········</i><i style="left:105.82px">·</i><i style="left:153.92px">·</i><i style="left:173.16px">·</i><i style="left:192.40px">·</i><i style="left:221.26px">·</i><i style="left:240.50px">·</i><i style="left:259.74px">·</i><i style="left:384.80px">·</i><i style="left:404.04px">·</i><i style="left:432.90px">·</i><i style="left:461.76px">··</i><i style="left:538.72px">·</i><i style="left:577.20px">··</i><i style="left:615.68px">·</i><span style="left:76.96px;color:#af00db">for</span><span style="left:115.44px;color:#7b3814">(</span><span style="left:125.06px;color:#267f99">int</span><span style="left:163.54px;color:#001080">i</span><span style="left:182.78px;color:#000000">=</span><span style="left:202.02px;color:#098658">0</span><span style="left:211.64px;color:#000000">;</span><span style="left:230.88px;color:#000000">i</span><span style="left:250.12px;color:#000000">&lt;</span><span style="left:269.36px;color:#001080">chars.length</span><span style="left:394.42px;color:#000000">/</span><span style="left:413.66px;color:#098658">2</span><span style="left:423.28px;color:#000000">;</span><span style="left:442.52px;color:#000000">i</span><span style="left:452.14px;color:#000000">+</span><span style="left:596.44px;color:#000000">+</span><span style="left:606.06px;color:#7b3814">)</span><span style="left:625.30px;color:#7b3814">{</span></div>
<div class="num" style="top:599.70px">26</div>
<div class="ln" style="top:623.45px"><i style="left:0.00px">············</i><i style="left:153.92px">·</i><i style="left:202.02px">·</i><i style="left:221.26px">·</i><i style="left:278.98px">·</i><i style="left:346.32px">·</i><i style="left:384.80px">·</i><span style="left:115.44px;color:#267f99">char</span><span style="left:163.54px;color:#001080">temp</span><span style="left:211.64px;color:#000000">=</span><span style="left:230.88px;color:#000000">chars</span><span style="left:461.76px;color:#0431fa">[</span><span style="left:471.38px;color:#000000">i</span><span style="left:481.00px;color:#0431fa">]</span><span style="left:490.62px;color:#000000">;</span></div>
<div class="num" style="top:623.45px">27</div>
<div class="ln" style="top:647.20px"><i style="left:0.00px">············</i><i style="left:192.40px">·</i><i style="left:211.64px">·</i><i style="left:269.36px">·</i><i style="left:346.32px">··</i><i style="left:384.80px">·</i><i style="left:548.34px">·</i><i style="left:567.58px">·</i><i style="left:586.82px">·</i><i style="left:606.06px">·</i><span style="left:115.44px;color:#000000">chars</span><span style="left:163.54px;color:#0431fa">[</span><span style="left:173.16px;color:#000000">i</span><span style="left:182.78px;color:#0431fa">]</span><span style="left:202.02px;color:#000000">=</span><span style="left:221.26px;color:#000000">chars</span><span style="left:423.28px;color:#0431fa">[</span><span style="left:432.90px;color:#001080">chars.length</span><span style="left:557.96px;color:#000000">-</span><span style="left:577.20px;color:#098658">1</span><span style="left:596.44px;color:#000000">-</span><span style="left:615.68px;color:#001080">i</span><span style="left:625.30px;color:#0431fa">]</span><span style="left:634.92px;color:#000000">;</span></div>
<div class="num" style="top:647.20px">28</div>
<div class="ln" style="top:670.95px"><i style="left:0.00px">············</i><i style="left:230.88px">·</i><i style="left:269.36px">·</i><i style="left:519.48px">·</i><i style="left:538.72px">·</i><i style="left:557.96px">·</i><i style="left:577.20px">·</i><i style="left:606.06px">·</i><i style="left:625.30px">·</i><span style="left:115.44px;color:#000000">chars</span><span style="left:163.54px;color:#0431fa">[</span><span style="left:173.16px;color:#000000">chars</span><span style="left:221.26px;color:#000000">.</span><span style="left:461.76px;color:#001080">length</span><span style="left:529.10px;color:#000000">-</span><span style="left:548.34px;color:#098658">1</span><span style="left:567.58px;color:#000000">-</span><span style="left:586.82px;color:#001080">i</span><span style="left:596.44px;color:#0431fa">]</span><span style="left:615.68px;color:#000000">=</span><span style="left:634.92px;color:#001080">temp</span><span style="left:673.40px;color:#000000">;</span><span style="left:683.02px;color:#7b3814">}</span></div>
<div class="num" style="top:670.95px">29</div>
<div class="ln" style="top:694.70px"><i style="left:0.00px">········</i><i style="left:134.68px">·</i><i style="left:173.16px">·</i><i style="left:240.50px">·</i><i style="left:346.32px">··</i><span style="left:76.96px;color:#af00db">return</span><span style="left:144.30px;color:#af00db">new</span><span style="left:182.78px;color:#795e26">String</span><span style="left:423.28px;color:#7b3814">(</span><span style="left:432.90px;color:#000000">chars</span><span style="left:481.00px;color:#7b3814">)</span><span style="left:490.62px;color:#000000">;</span><span style="left:500.24px;color:#319331">}</span></div>
<div class="num" style="top:694.70px">30</div>
<div class="ln" style="top:718.45px"><i style="left:0.00px">····</i><i style="left:105.82px">·</i><i style="left:173.16px">·</i><i style="left:240.50px">·</i><i style="left:307.84px">·</i><i style="left:384.80px">··</i><i style="left:423.28px">·</i><i style="left:586.82px">·</i><i style="left:634.92px">·</i><span style="left:38.48px;color:#0000ff">private</span><span style="left:115.44px;color:#0000ff">static</span><span style="left:182.78px;color:#267f99">String</span><span style="left:250.12px;color:#001080">encode</span><span style="left:461.76px;color:#795e26">Base64</span><span style="left:519.48px;color:#319331">(</span><span style="left:529.10px;color:#267f99">String</span><span style="left:596.44px;color:#001080">str</span><span style="left:625.30px;color:#319331">)</span><span style="left:644.54px;color:#319331">{</span></div>
<div class="num" style="top:718.45px">31</div>
<div class="ln" style="top:742.20px"><i style="left:0.00px">········</i><i style="left:134.68px">·</i><i style="left:192.40px">·</i><i style="left:211.64px">·</i><i style="left:288.60px">·</i><i style="left:346.32px">·</i><i style="left:461.76px">·</i><span style="left:76.96px;color:#267f99">byte</span><span style="left:115.44px;color:#7b3814">[]</span><span style="left:144.30px;color:#001080">bytes</span><span style="left:202.02px;color:#000000">=</span><span style="left:221.26px;color:#267f99">str</span><span style="left:250.12px;color:#000000">.</span><span style="left:259.74px;color:#267f99">get</span><span style="left:471.38px;color:#795e26">Bytes</span><span style="left:519.48px;color:#7b3814">()</span><span style="left:538.72px;color:#000000">;</span></div>
<div class="num" style="top:742.20px">32</div>
<div class="ln" style="top:765.95px"><i style="left:0.00px">········</i><i style="left:134.68px">·</i><i style="left:413.66px">·</i><i style="left:538.72px">··</i><span style="left:76.96px;color:#af00db">return</span><span style="left:144.30px;color:#001080">Base64</span><span style="left:202.02px;color:#000000">.</span><span style="left:211.64px;color:#795e26">getEncoder</span><span style="left:307.84px;color:#7b3814">()</span><span style="left:327.08px;color:#000000">.</span><span style="left:336.70px;color:#267f99">encodeTo</span><span style="left:615.68px;color:#795e26">String</span><span style="left:673.40px;color:#7b3814">(</span><span style="left:683.02px;color:#000000">bytes</span><span style="left:731.12px;color:#7b3814">)</span><span style="left:740.74px;color:#000000">;</span><span style="left:750.36px;color:#319331">}</span></div>
<div class="num" style="top:765.95px">33</div>
<div class="ln" style="top:789.70px"><i style="left:0.00px">····</i><i style="left:105.82px">·</i><i style="left:173.16px">·</i><i style="left:240.50px">·</i><i style="left:278.98px">·</i><i style="left:346.32px">··</i><i style="left:384.80px">·</i><i style="left:557.96px">·</i><i style="left:606.06px">·</i><i style="left:644.54px">·</i><i style="left:692.64px">·</i><span style="left:38.48px;color:#0000ff">private</span><span style="left:115.44px;color:#0000ff">static</span><span style="left:182.78px;color:#267f99">String</span><span style="left:250.12px;color:#001080">add</span><span style="left:423.28px;color:#795e26">Padding</span><span style="left:490.62px;color:#319331">(</span><span style="left:500.24px;color:#267f99">String</span><span style="left:567.58px;color:#001080">str</span><span style="left:596.44px;color:#000000">,</span><span style="left:615.68px;color:#267f99">int</span><span style="left:654.16px;color:#001080">gap</span><span style="left:683.02px;color:#319331">)</span><span style="left:702.26px;color:#319331">{</span></div>
<div class="num" style="top:789.70px">34</div>
<div class="ln" style="top:813.45px"><i style="left:0.00px">········</i><i style="left:134.68px">·</i><i style="left:173.16px">·</i><i style="left:192.40px">·</i><i style="left:230.88px">·</i><i style="left:278.98px">·</i><i style="left:307.84px">·</i><span style="left:76.96px;color:#267f99">Random</span><span style="left:144.30px;color:#001080">rng</span><span style="left:182.78px;color:#000000">=</span><span style="left:202.02px;color:#af00db">new</span><span style="left:240.50px;color:#267f99">Rand</span><span style="left:500.24px;color:#795e26">om</span><span style="left:519.48px;color:#7b3814">(</span><span style="left:529.10px;color:#098658">123</span><span style="left:557.96px;color:#7b3814">)</span><span style="left:567.58px;color:#000000">;</span></div>
<div class="num" style="top:813.45px">35</div>
<div class="ln" style="top:837.20px"><i style="left:0.00px">········</i><i style="left:202.02px">·</i><i style="left:269.36px">·</i><i style="left:288.60px">·</i><i style="left:327.08px">·</i><i style="left:394.42px">··</i><i style="left:461.76px">····</i><span style="left:76.96px;color:#267f99">StringBuilder</span><span style="left:211.64px;color:#001080">result</span><span style="left:278.98px;color:#000000">=</span><span style="left:298.22px;color:#af00db">new</span><span style="left:336.70px;color:#267f99">String</span><span style="left:500.24px;color:#795e26">Builder</span><span style="left:567.58px;color:#7b3814">()</span><span style="left:586.82px;color:#000000">;</span></div>
<div class="num" style="top:837.20px">36</div>
<div class="ln" style="top:860.95px"><i style="left:0.00px">········</i><i style="left:105.82px">·</i><i style="left:153.92px">·</i><i style="left:173.16px">·</i><i style="left:192.40px">·</i><i style="left:221.26px">·</i><i style="left:240.50px">·</i><i style="left:259.74px">·</i><i style="left:346.32px">·</i><i style="left:423.28px">··</i><i style="left:500.24px">·</i><i style="left:557.96px">·</i><i style="left:606.06px">·</i><span style="left:76.96px;color:#af00db">for</span><span style="left:115.44px;color:#7b3814">(</span><span style="left:125.06px;color:#267f99">int</span><span style="left:163.54px;color:#001080">i</span><span style="left:182.78px;color:#000000">=</span><span style="left:202.02px;color:#098658">0</span><span style="left:211.64px;color:#000000">;</span><span style="left:230.88px;color:#000000">i</span><span style="left:250.12px;color:#000000">&lt;</span><span style="left:269.36px;color:#267f99">str</span><span style="left:298.22px;color:#000000">.</span><span style="left:307.84px;color:#267f99">leng</span><span style="left:509.86px;color:#795e26">th</span><span style="left:529.10px;color:#0431fa">()</span><span style="left:548.34px;color:#000000">;</span><span style="left:567.58px;color:#000000">i</span><span style="left:577.20px;color:#000000">++</span><span style="left:596.44px;color:#7b3814">)</span><span style="left:615.68px;color:#7b3814">{</span></div>
<div class="num" style="top:860.95px">37</div>
<div class="ln" style="top:884.70px"><i style="left:0.00px">············</i><i style="left:327.08px">·</i><i style="left:346.32px">·</i><span style="left:115.44px;color:#000000">result</span><span style="left:173.16px;color:#000000">.</span><span style="left:182.78px;color:#795e26">append</span><span style="left:240.50px;color:#0431fa">(</span><span style="left:250.12px;color:#000000">str</span><span style="left:278.98px;color:#000000">.</span><span style="left:288.60px;color:#001080">char</span><span style="left:538.72px;color:#795e26">At</span><span style="left:557.96px;color:#319331">(</span><span style="left:567.58px;color:#000000">i</span><span style="left:577.20px;color:#319331">)</span><span style="left:586.82px;color:#0431fa">)</span><span style="left:596.44px;color:#000000">;</span></div>
<div class="num" style="top:884.70px">38</div>
<div class="ln" style="top:908.45px"><i style="left:0.00px">············</i><i style="left:134.68px">·</i><i style="left:173.16px">·</i><i style="left:192.40px">·</i><i style="left:221.26px">·</i><i style="left:240.50px">·</i><i style="left:278.98px">·</i><i style="left:307.84px">·</i><i style="left:327.08px">·</i><i style="left:355.94px">·</i><i style="left:375.18px">·</i><i style="left:394.42px">·</i><i style="left:481.00px">·</i><i style="left:500.24px">··</i><i style="left:538.72px">·</i><i style="left:577.20px">·</i><i style="left:625.30px">·</i><i style="left:644.54px">·</i><i style="left:673.40px">·</i><span style="left:115.44px;color:#af00db">if</span><span style="left:144.30px;color:#0431fa">(</span><span style="left:153.92px;color:#319331">(</span><span style="left:163.54px;color:#000000">i</span><span style="left:182.78px;color:#000000">+</span><span style="left:202.02px;color:#098658">1</span><span style="left:211.64px;color:#319331">)</span><span style="left:230.88px;color:#000000">%</span><span style="left:250.12px;color:#000000">gap</span><span style="left:288.60px;color:#000000">==</span><span style="left:317.46px;color:#098658">0</span><span style="left:336.70px;color:#000000">&amp;&amp;</span><span style="left:365.56px;color:#000000">i</span><span style="left:384.80px;color:#000000">&lt;</span><span style="left:404.04px;color:#267f99">str</span><span style="left:432.90px;color:#000000">.</span><span style="left:442.52px;color:#267f99">leng</span><span style="left:586.82px;color:#795e26">th</span><span style="left:606.06px;color:#319331">()</span><span style="left:634.92px;color:#000000">-</span><span style="left:654.16px;color:#098658">1</span><span style="left:663.78px;color:#0431fa">)</span><span style="left:683.02px;color:#0431fa">{</span></div>
<div class="num" style="top:908.45px">39</div>
<div class="ln" style="top:932.20px"><i style="left:0.00px">················</i><i style="left:365.56px">·</i><i style="left:384.80px">·</i></div>
<div class="num" style="top:932.20px"></div>
</div>
<div class="abs" style="left:60px;top:115px;width:1723px;height:6px;z-index:4;background:linear-gradient(rgba(0,0,0,.13),rgba(0,0,0,.04) 45%,rgba(0,0,0,0))"></div>
<div id="lens" class="abs">Run | Debug</div>
<svg class="abs" style="left:66px;top:109px;z-index:4" width="12" height="10" viewBox="0 0 12 10"><path d="M3.700 2v6.300h4.600V2M3.700 5.600h4.600" fill="none" stroke="#e2b54e" stroke-width="1.400"/></svg>

<svg class="abs" style="left:1791px;top:115px" width="129" height="936" viewBox="1791 115 129 936"><rect x="1791" y="115" width="112" height="78.3" fill="#d6ebff"/><rect x="1791" y="115.00" width="39.0" height="2.00" fill="#add6ff"/><rect x="1791" y="116.95" width="48.0" height="2.00" fill="#add6ff"/><rect x="1791" y="118.90" width="47.0" height="2.00" fill="#add6ff"/><rect x="1791" y="120.85" width="62.0" height="2.00" fill="#add6ff"/><rect x="1791" y="122.80" width="71.0" height="2.00" fill="#add6ff"/><rect x="1791" y="124.75" width="60.0" height="2.00" fill="#add6ff"/><rect x="1791" y="126.70" width="76.0" height="2.00" fill="#add6ff"/><rect x="1791" y="128.65" width="64.0" height="2.00" fill="#add6ff"/><rect x="1791" y="130.60" width="73.0" height="2.00" fill="#add6ff"/><rect x="1791" y="132.55" width="62.0" height="2.00" fill="#add6ff"/><rect x="1791" y="134.50" width="68.0" height="2.00" fill="#add6ff"/><rect x="1791" y="136.45" width="66.0" height="2.00" fill="#add6ff"/><rect x="1791" y="138.40" width="41.0" height="2.00" fill="#add6ff"/><rect x="1791" y="140.35" width="90.0" height="2.00" fill="#add6ff"/><rect x="1791" y="142.30" width="63.0" height="2.00" fill="#add6ff"/><rect x="1791" y="144.25" width="63.0" height="2.00" fill="#add6ff"/><rect x="1791" y="146.20" width="66.0" height="2.00" fill="#add6ff"/><rect x="1791" y="148.15" width="82.0" height="2.00" fill="#add6ff"/><rect x="1791" y="150.10" width="75.0" height="2.00" fill="#add6ff"/><rect x="1791" y="152.05" width="70.0" height="2.00" fill="#add6ff"/><rect x="1791" y="154.00" width="82.0" height="2.00" fill="#add6ff"/><rect x="1791" y="155.95" width="46.0" height="2.00" fill="#add6ff"/><rect x="1791" y="157.90" width="53.0" height="2.00" fill="#add6ff"/><rect x="1791" y="159.85" width="79.0" height="2.00" fill="#add6ff"/><rect x="1791" y="161.80" width="61.0" height="2.00" fill="#add6ff"/><rect x="1791" y="163.75" width="67.0" height="2.00" fill="#add6ff"/><rect x="1791" y="165.70" width="53.0" height="2.00" fill="#add6ff"/><rect x="1791" y="167.65" width="68.0" height="2.00" fill="#add6ff"/><rect x="1791" y="169.60" width="73.0" height="2.00" fill="#add6ff"/><rect x="1791" y="171.55" width="54.0" height="2.00" fill="#add6ff"/><rect x="1791" y="173.50" width="69.0" height="2.00" fill="#add6ff"/><rect x="1791" y="175.45" width="58.0" height="2.00" fill="#add6ff"/><rect x="1791" y="177.40" width="80.0" height="2.00" fill="#add6ff"/><rect x="1791" y="179.35" width="75.0" height="2.00" fill="#add6ff"/><rect x="1791" y="181.30" width="61.0" height="2.00" fill="#add6ff"/><rect x="1791" y="183.25" width="63.0" height="2.00" fill="#add6ff"/><rect x="1791" y="185.20" width="66.0" height="2.00" fill="#add6ff"/><rect x="1791" y="187.15" width="64.0" height="2.00" fill="#add6ff"/><rect x="1791" y="189.10" width="73.0" height="2.00" fill="#add6ff"/><rect x="1791" y="191.05" width="77.0" height="2.00" fill="#add6ff"/><rect x="1791.0" y="115.00" width="20.0" height="2.55" fill="#f01818" fill-opacity=".85"/><rect x="1823.0" y="116.95" width="2.0" height="2.55" fill="#f01818" fill-opacity=".85"/><rect x="1828.0" y="118.90" width="7.3" height="2.55" fill="#f01818" fill-opacity=".85"/><rect x="1836.0" y="118.90" width="2.0" height="2.55" fill="#f01818" fill-opacity=".85"/><rect x="1806.0" y="122.80" width="5.0" height="2.55" fill="#f01818" fill-opacity=".85"/><rect x="1806.0" y="124.75" width="9.0" height="2.55" fill="#f01818" fill-opacity=".85"/><rect x="1839.0" y="124.75" width="9.0" height="2.55" fill="#f01818" fill-opacity=".85"/><rect x="1810.0" y="126.70" width="5.0" height="2.55" fill="#f01818" fill-opacity=".85"/><rect x="1860.0" y="126.70" width="3.0" height="2.55" fill="#f01818" fill-opacity=".85"/><rect x="1817.0" y="128.65" width="7.0" height="2.55" fill="#f01818" fill-opacity=".85"/><rect x="1806.0" y="130.60" width="6.0" height="2.55" fill="#f01818" fill-opacity=".85"/><rect x="1853.0" y="130.60" width="2.0" height="2.55" fill="#f01818" fill-opacity=".85"/><rect x="1844.0" y="132.55" width="7.0" height="2.55" fill="#f01818" fill-opacity=".85"/><rect x="1806.0" y="134.50" width="6.0" height="2.55" fill="#f01818" fill-opacity=".85"/><rect x="1850.0" y="134.50" width="7.0" height="2.55" fill="#f01818" fill-opacity=".85"/><rect x="1806.0" y="136.45" width="6.0" height="2.55" fill="#f01818" fill-opacity=".85"/><rect x="1844.0" y="136.45" width="2.0" height="2.55" fill="#f01818" fill-opacity=".85"/><rect x="1817.0" y="140.35" width="5.0" height="2.55" fill="#f01818" fill-opacity=".85"/><rect x="1820.0" y="142.30" width="2.0" height="2.55" fill="#f01818" fill-opacity=".85"/><rect x="1843.0" y="142.30" width="10.0" height="2.55" fill="#f01818" fill-opacity=".85"/><rect x="1843.0" y="144.25" width="8.0" height="2.55" fill="#f01818" fill-opacity=".85"/><rect x="1803.0" y="146.20" width="2.0" height="2.55" fill="#f01818" fill-opacity=".85"/><rect x="1852.3" y="146.20" width="2.0" height="2.55" fill="#f01818" fill-opacity=".85"/><rect x="1812.0" y="148.15" width="4.0" height="2.55" fill="#f01818" fill-opacity=".85"/><rect x="1856.0" y="148.15" width="16.0" height="2.55" fill="#f01818" fill-opacity=".85"/><rect x="1791.0" y="150.10" width="72.0" height="2.55" fill="#f01818" fill-opacity=".85"/><rect x="1803.0" y="152.05" width="2.0" height="2.55" fill="#f01818" fill-opacity=".85"/><rect x="1805.0" y="152.05" width="55.0" height="2.55" fill="#f01818" fill-opacity=".85"/><rect x="1791.0" y="154.00" width="81.0" height="2.55" fill="#f01818" fill-opacity=".85"/><rect x="1791.0" y="155.95" width="45.0" height="2.55" fill="#f01818" fill-opacity=".85"/><rect x="1791.0" y="157.90" width="14.0" height="2.55" fill="#f01818" fill-opacity=".85"/><rect x="1813.0" y="157.90" width="2.0" height="2.55" fill="#f01818" fill-opacity=".85"/><rect x="1833.0" y="157.90" width="8.0" height="2.55" fill="#f01818" fill-opacity=".85"/><rect x="1817.0" y="159.85" width="6.0" height="2.55" fill="#f01818" fill-opacity=".85"/><rect x="1806.0" y="161.80" width="5.0" height="2.55" fill="#f01818" fill-opacity=".85"/><rect x="1843.0" y="161.80" width="8.0" height="2.55" fill="#f01818" fill-opacity=".85"/><rect x="1808.0" y="163.75" width="2.0" height="2.55" fill="#f01818" fill-opacity=".85"/><rect x="1838.0" y="163.75" width="16.0" height="2.55" fill="#f01818" fill-opacity=".85"/><rect x="1817.0" y="173.50" width="6.0" height="2.55" fill="#f01818" fill-opacity=".85"/><rect x="1806.0" y="175.45" width="5.0" height="2.55" fill="#f01818" fill-opacity=".85"/><rect x="1847.0" y="175.45" width="2.0" height="2.55" fill="#f01818" fill-opacity=".85"/><rect x="1825.0" y="177.40" width="2.0" height="2.55" fill="#f01818" fill-opacity=".85"/><rect x="1855.0" y="177.40" width="12.0" height="2.55" fill="#f01818" fill-opacity=".85"/><rect x="1869.0" y="177.40" width="2.0" height="2.55" fill="#f01818" fill-opacity=".85"/><rect x="1810.0" y="181.30" width="2.0" height="2.55" fill="#f01818" fill-opacity=".85"/><rect x="1846.0" y="181.30" width="4.0" height="2.55" fill="#f01818" fill-opacity=".85"/><rect x="1820.0" y="183.25" width="2.0" height="2.55" fill="#f01818" fill-opacity=".85"/><rect x="1826.0" y="183.25" width="6.0" height="2.55" fill="#f01818" fill-opacity=".85"/><rect x="1843.0" y="183.25" width="9.0" height="2.55" fill="#f01818" fill-opacity=".85"/><rect x="1808.0" y="185.20" width="2.0" height="2.55" fill="#f01818" fill-opacity=".85"/><rect x="1844.0" y="185.20" width="4.0" height="2.55" fill="#f01818" fill-opacity=".85"/><rect x="1817.0" y="187.15" width="3.0" height="2.55" fill="#f01818" fill-opacity=".85"/><rect x="1851.0" y="187.15" width="2.0" height="2.55" fill="#f01818" fill-opacity=".85"/><rect x="1829.0" y="189.10" width="2.0" height="2.55" fill="#f01818" fill-opacity=".85"/><rect x="1852.0" y="189.10" width="4.0" height="2.55" fill="#f01818" fill-opacity=".85"/><rect x="1857.0" y="189.10" width="4.0" height="2.55" fill="#f01818" fill-opacity=".85"/><rect x="1791" y="194.500" width="6" height="4" fill="#777" fill-opacity=".7"/><rect x="1800" y="194" width="6" height="1.500" fill="#c86be0"/><rect x="1808" y="194" width="9" height="1.500" fill="#8fc0cc"/><rect x="1836" y="194" width="11" height="1.500" fill="#b9a878"/><rect x="1813" y="196" width="1" height="1.500" fill="#999"/><rect x="1819" y="198" width="1" height="1.500" fill="#999"/><rect x="1903" y="115" width="1" height="936" fill="#e6e6e6"/><rect x="1904" y="121" width="16" height="446" fill="#c1c1c1"/><rect x="1904" y="566.500" width="16" height="1.500" fill="#4a4a4a"/><rect x="1915.500" y="115" width="4.500" height="6.500" fill="#ee3a10"/><rect x="1915.500" y="121.5" width="4.500" height="27.0" fill="#c55a5a"/><rect x="1915.500" y="170" width="4.500" height="90" fill="#c55a5a"/><rect x="1915.500" y="272" width="4.500" height="147.5" fill="#c55a5a"/><rect x="1915.500" y="465" width="4.500" height="34" fill="#c55a5a"/><rect x="1915.500" y="511" width="4.500" height="54" fill="#c55a5a"/></svg>

<div id="status" class="abs">
 <svg style="left:11px;top:6px;stroke-width:1.600" width="16" height="16" viewBox="0 0 16 16"><path d="M2 6l5 4-5 5M14 1 9 5l5 4"/></svg>
 <svg style="left:51px;top:4px" width="19" height="19" viewBox="0 0 19 19"><circle cx="9.500" cy="9.500" r="8"/><path d="M6.500 6.500l6 6M12.500 6.500l-6 6"/></svg>
 <span style="left:74px">90</span>
 <svg style="left:96px;top:4px" width="19" height="19" viewBox="0 0 19 19"><path d="M9.500 2 17.500 16.500h-16z"/><path d="M9.500 7.500v4.500M9.500 14v.5"/></svg>
 <span style="left:118px">1</span>
 <svg style="left:147px;top:3px" width="20" height="21" viewBox="0 0 20 21"><path d="M3 8h11v6a5 5 0 0 1-5 5H8a5 5 0 0 1-5-5zM14 9.500h1.500a2.500 2.500 0 0 1 0 5H14M5 2l1.500 3.500M8 2l1.500 3.500M11 2l1.500 3.500"/></svg>
 <span style="left:171px;font-size:14.2px;letter-spacing:-.35px">Java: Ready</span>
 <span style="left:1307px">行 40，列 78 (已选择2258)</span>
 <span style="left:1503px">空格: 4</span>
 <span style="left:1569px">UTF-8</span>
 <span style="left:1628px;letter-spacing:-.8px">CRLF</span>
 <span style="left:1683px;top:1.5px;font-size:16.5px;letter-spacing:-.5px">{ }</span>
 <span style="left:1709px;letter-spacing:-.6px">Java</span>
 <svg style="left:1756px;top:3px;stroke-width:2.100" width="22" height="21" viewBox="0 0 22 21"><rect x="4" y="3" width="6" height="7" rx="2.500"/><rect x="12" y="3" width="6" height="7" rx="2.500"/><path d="M4 7c-3 2-2.500 9 1 10.500 3.500 2 8.500 2 12 0 3.500-1.500 4-8.500 1-10.500M9 12.500v2.500M13 12.500v2.500"/></svg>
 <svg style="left:1797px;top:5px" width="20" height="17" viewBox="0 0 20 17"><circle cx="10" cy="8.500" r="1.300" fill="#fff"/><path d="M6.500 5a5 5 0 0 0 0 7M13.500 5a5 5 0 0 1 0 7M4 2.500a8.500 8.500 0 0 0 0 12M16 2.500a8.500 8.500 0 0 1 0 12"/></svg>
 <span style="left:1821px">Go Live</span>
 <svg style="left:1889px;top:3px" width="22" height="22" viewBox="0 0 22 22"><path d="M13 3.500a6 6 0 0 0-8.500 5.500v5l-2 3h16l-2-3v-2.500M8 17.500a2.600 2.600 0 0 0 5 0"/><circle cx="16.500" cy="5" r="3.200" fill="#fff" stroke="none"/></svg>
</div>
<div id="bot" class="abs"></div>

<svg id="arrows" class="abs" width="1920" height="1080" viewBox="0 0 1920 1080">
 <path d="M595.200 430.900 622.500 408.400 624 416.900 1174 330 627.200 435 628.750 443.100Z" fill="#fb5061"/>
 <path d="M698.900 635.100 731.900 639.900 726.800 646.500 991 867.200 716.400 659.700 711.200 666Z" fill="#fb5061"/>
</svg>
</body></html>
